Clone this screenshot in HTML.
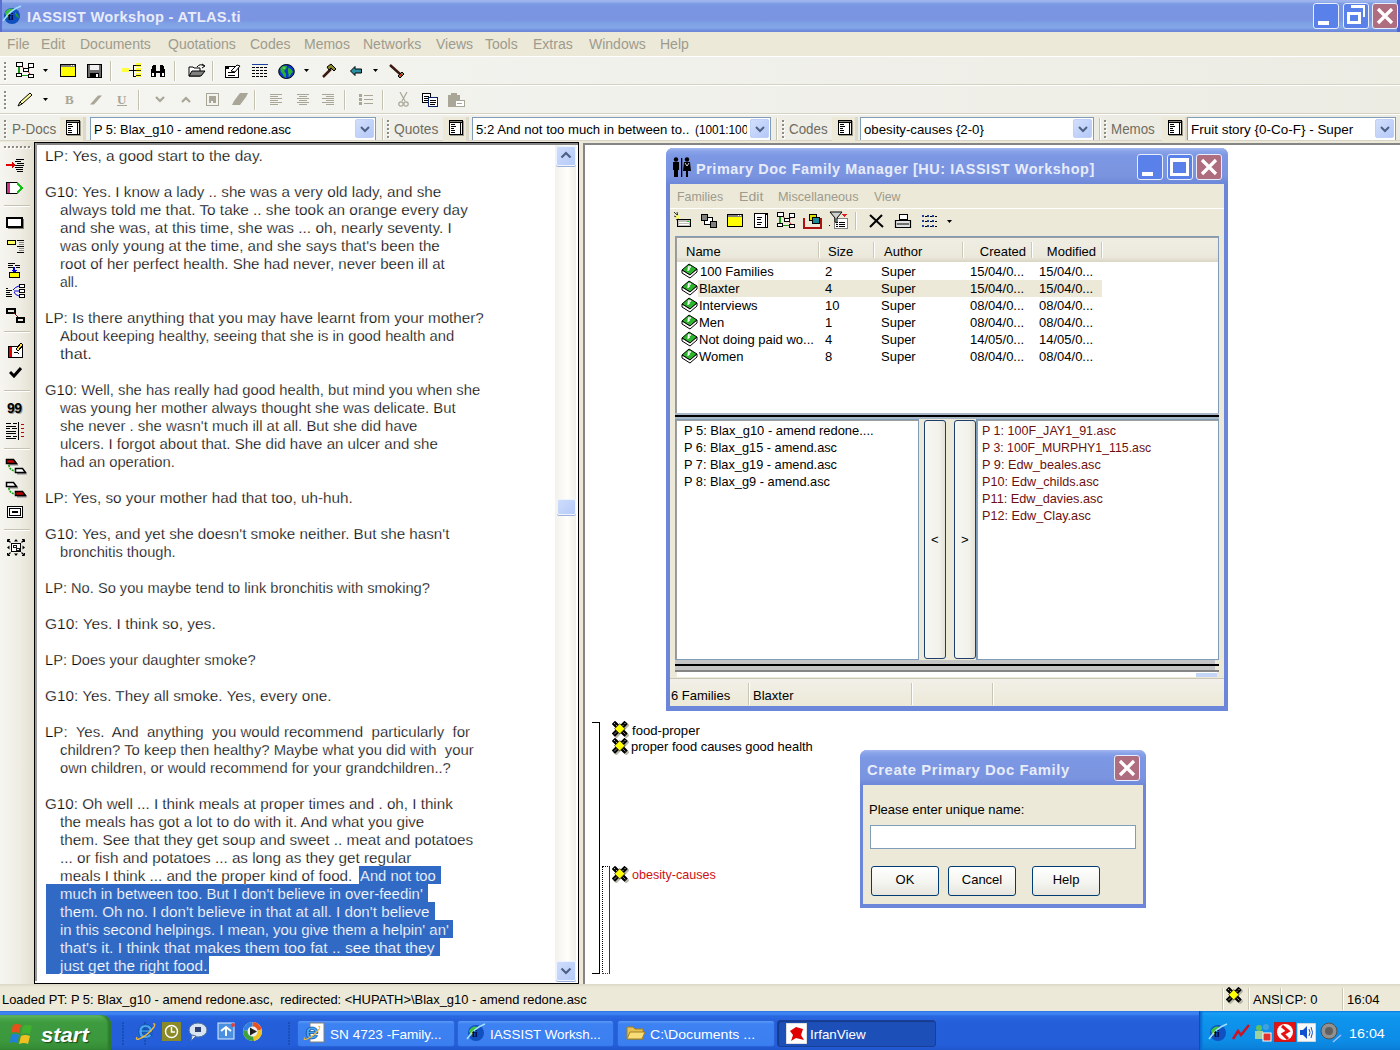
<!DOCTYPE html><html><head><meta charset="utf-8"><style>
*{margin:0;padding:0;box-sizing:border-box}
html,body{width:1400px;height:1050px;overflow:hidden;background:#ECE9D8;font-family:"Liberation Sans",sans-serif}
div{position:absolute}
.t{white-space:pre;line-height:1}
.b{font-weight:bold}
</style></head><body><div style="left:0px;top:0px;width:1400px;height:32px;background:linear-gradient(#A2B6EC 0px,#9AB1EC 2px,#7FA0E5 3px,#7A96E2 6px,#7A94E1 20px,#80A3E6 24px,#82A6E7 28px,#7290DE 30px,#6C84D8 32px)"></div>
<div style="left:0px;top:0px;width:2px;height:32px;background:#5B6FD0"></div>
<div style="left:1397px;top:0px;width:3px;height:32px;background:#5565CC"></div>
<div id="f0" class="t " style="left:27px;top:9.30px;font-size:15px;color:#E8ECFA;transform:scaleX(0.9777);transform-origin:0 0;font-weight:bold;letter-spacing:0.3px">IASSIST Workshop - ATLAS.ti</div>
<div style="left:1313px;top:3px;width:26px;height:26px;background:#5A80EA;border:1px solid #E8EEFB;border-radius:3px"></div>
<div style="left:1343px;top:3px;width:26px;height:26px;background:#5A80EA;border:1px solid #E8EEFB;border-radius:3px"></div>
<div style="left:1372px;top:3px;width:26px;height:26px;background:#AE6E80;border:1px solid #E8EEFB;border-radius:3px"></div>
<div style="left:1318px;top:21px;width:11px;height:4px;background:#fff"></div>
<div style="left:1347px;top:12px;width:14px;height:12px;border:3px solid #fff;border-top-width:3px"></div>
<div style="left:1351px;top:5px;width:14px;height:12px;border:2px solid #fff;border-top-width:3px;border-left:none;border-bottom:none"></div>
<svg style="position:absolute;left:1372px;top:3px;" width="26" height="26" viewBox="0 0 26 26"><path d="M6 6L20 20M20 6L6 20" stroke="#fff" stroke-width="3.2"/></svg>
<div style="left:0px;top:32px;width:1400px;height:24px;background:#ECE9D8"></div>
<div class="t " style="left:7px;top:37.15px;font-size:14px;color:#9E9B8E;">File</div>
<div class="t " style="left:41px;top:37.15px;font-size:14px;color:#9E9B8E;">Edit</div>
<div class="t " style="left:80px;top:37.15px;font-size:14px;color:#9E9B8E;">Documents</div>
<div class="t " style="left:168px;top:37.15px;font-size:14px;color:#9E9B8E;">Quotations</div>
<div class="t " style="left:250px;top:37.15px;font-size:14px;color:#9E9B8E;">Codes</div>
<div class="t " style="left:304px;top:37.15px;font-size:14px;color:#9E9B8E;">Memos</div>
<div class="t " style="left:363px;top:37.15px;font-size:14px;color:#9E9B8E;">Networks</div>
<div class="t " style="left:436px;top:37.15px;font-size:14px;color:#9E9B8E;">Views</div>
<div class="t " style="left:485px;top:37.15px;font-size:14px;color:#9E9B8E;">Tools</div>
<div class="t " style="left:533px;top:37.15px;font-size:14px;color:#9E9B8E;">Extras</div>
<div class="t " style="left:589px;top:37.15px;font-size:14px;color:#9E9B8E;">Windows</div>
<div class="t " style="left:660px;top:37.15px;font-size:14px;color:#9E9B8E;">Help</div>
<div style="left:0px;top:56px;width:1400px;height:1px;background:#fff"></div>
<div style="left:0px;top:57px;width:1400px;height:27px;background:linear-gradient(90deg,#F5F5F1 0%,#F1F1EC 45%,#EDECE3 100%)"></div>
<div style="left:0px;top:84px;width:1400px;height:1px;background:#D5D2C3"></div>
<div style="left:0px;top:85px;width:1400px;height:1px;background:#FFFFFF"></div>
<div style="left:0px;top:86px;width:1400px;height:27px;background:linear-gradient(90deg,#F5F5F1 0%,#F1F1EC 45%,#EDECE3 100%)"></div>
<div style="left:0px;top:113px;width:1400px;height:1px;background:#D5D2C3"></div>
<div style="left:0px;top:114px;width:1400px;height:1px;background:#FFFFFF"></div>
<div style="left:0px;top:115px;width:1400px;height:25px;background:linear-gradient(90deg,#F1F1EC,#ECEBE2)"></div>
<div style="left:0px;top:140px;width:1400px;height:1px;background:#D8D5C8"></div>
<div style="left:5px;top:63px;width:2px;height:2px;background:#FFFFFF"></div>
<div style="left:4px;top:62px;width:2px;height:2px;background:#8F8C7F"></div>
<div style="left:5px;top:67px;width:2px;height:2px;background:#FFFFFF"></div>
<div style="left:4px;top:66px;width:2px;height:2px;background:#8F8C7F"></div>
<div style="left:5px;top:71px;width:2px;height:2px;background:#FFFFFF"></div>
<div style="left:4px;top:70px;width:2px;height:2px;background:#8F8C7F"></div>
<div style="left:5px;top:75px;width:2px;height:2px;background:#FFFFFF"></div>
<div style="left:4px;top:74px;width:2px;height:2px;background:#8F8C7F"></div>
<div style="left:5px;top:79px;width:2px;height:2px;background:#FFFFFF"></div>
<div style="left:4px;top:78px;width:2px;height:2px;background:#8F8C7F"></div>
<div style="left:5px;top:92px;width:2px;height:2px;background:#FFFFFF"></div>
<div style="left:4px;top:91px;width:2px;height:2px;background:#8F8C7F"></div>
<div style="left:5px;top:96px;width:2px;height:2px;background:#FFFFFF"></div>
<div style="left:4px;top:95px;width:2px;height:2px;background:#8F8C7F"></div>
<div style="left:5px;top:100px;width:2px;height:2px;background:#FFFFFF"></div>
<div style="left:4px;top:99px;width:2px;height:2px;background:#8F8C7F"></div>
<div style="left:5px;top:104px;width:2px;height:2px;background:#FFFFFF"></div>
<div style="left:4px;top:103px;width:2px;height:2px;background:#8F8C7F"></div>
<div style="left:5px;top:108px;width:2px;height:2px;background:#FFFFFF"></div>
<div style="left:4px;top:107px;width:2px;height:2px;background:#8F8C7F"></div>
<div style="left:5px;top:121px;width:2px;height:2px;background:#FFFFFF"></div>
<div style="left:4px;top:120px;width:2px;height:2px;background:#8F8C7F"></div>
<div style="left:5px;top:125px;width:2px;height:2px;background:#FFFFFF"></div>
<div style="left:4px;top:124px;width:2px;height:2px;background:#8F8C7F"></div>
<div style="left:5px;top:129px;width:2px;height:2px;background:#FFFFFF"></div>
<div style="left:4px;top:128px;width:2px;height:2px;background:#8F8C7F"></div>
<div style="left:5px;top:133px;width:2px;height:2px;background:#FFFFFF"></div>
<div style="left:4px;top:132px;width:2px;height:2px;background:#8F8C7F"></div>
<div style="left:5px;top:137px;width:2px;height:2px;background:#FFFFFF"></div>
<div style="left:4px;top:136px;width:2px;height:2px;background:#8F8C7F"></div>
<div style="left:388px;top:121px;width:2px;height:2px;background:#FFFFFF"></div>
<div style="left:387px;top:120px;width:2px;height:2px;background:#8F8C7F"></div>
<div style="left:388px;top:125px;width:2px;height:2px;background:#FFFFFF"></div>
<div style="left:387px;top:124px;width:2px;height:2px;background:#8F8C7F"></div>
<div style="left:388px;top:129px;width:2px;height:2px;background:#FFFFFF"></div>
<div style="left:387px;top:128px;width:2px;height:2px;background:#8F8C7F"></div>
<div style="left:388px;top:133px;width:2px;height:2px;background:#FFFFFF"></div>
<div style="left:387px;top:132px;width:2px;height:2px;background:#8F8C7F"></div>
<div style="left:388px;top:137px;width:2px;height:2px;background:#FFFFFF"></div>
<div style="left:387px;top:136px;width:2px;height:2px;background:#8F8C7F"></div>
<div style="left:783px;top:121px;width:2px;height:2px;background:#FFFFFF"></div>
<div style="left:782px;top:120px;width:2px;height:2px;background:#8F8C7F"></div>
<div style="left:783px;top:125px;width:2px;height:2px;background:#FFFFFF"></div>
<div style="left:782px;top:124px;width:2px;height:2px;background:#8F8C7F"></div>
<div style="left:783px;top:129px;width:2px;height:2px;background:#FFFFFF"></div>
<div style="left:782px;top:128px;width:2px;height:2px;background:#8F8C7F"></div>
<div style="left:783px;top:133px;width:2px;height:2px;background:#FFFFFF"></div>
<div style="left:782px;top:132px;width:2px;height:2px;background:#8F8C7F"></div>
<div style="left:783px;top:137px;width:2px;height:2px;background:#FFFFFF"></div>
<div style="left:782px;top:136px;width:2px;height:2px;background:#8F8C7F"></div>
<div style="left:1105px;top:121px;width:2px;height:2px;background:#FFFFFF"></div>
<div style="left:1104px;top:120px;width:2px;height:2px;background:#8F8C7F"></div>
<div style="left:1105px;top:125px;width:2px;height:2px;background:#FFFFFF"></div>
<div style="left:1104px;top:124px;width:2px;height:2px;background:#8F8C7F"></div>
<div style="left:1105px;top:129px;width:2px;height:2px;background:#FFFFFF"></div>
<div style="left:1104px;top:128px;width:2px;height:2px;background:#8F8C7F"></div>
<div style="left:1105px;top:133px;width:2px;height:2px;background:#FFFFFF"></div>
<div style="left:1104px;top:132px;width:2px;height:2px;background:#8F8C7F"></div>
<div style="left:1105px;top:137px;width:2px;height:2px;background:#FFFFFF"></div>
<div style="left:1104px;top:136px;width:2px;height:2px;background:#8F8C7F"></div>
<div style="left:382px;top:118px;width:1px;height:22px;background:#C5C2B1"></div>
<div style="left:383px;top:118px;width:1px;height:22px;background:#fff"></div>
<div style="left:776px;top:118px;width:1px;height:22px;background:#C5C2B1"></div>
<div style="left:777px;top:118px;width:1px;height:22px;background:#fff"></div>
<div style="left:1099px;top:118px;width:1px;height:22px;background:#C5C2B1"></div>
<div style="left:1100px;top:118px;width:1px;height:22px;background:#fff"></div>
<div id="f1" class="t " style="left:11.5px;top:122.15px;font-size:14px;color:#6E6C61;transform:scaleX(0.9650);transform-origin:0 0;">P-Docs</div>
<div style="left:60px;top:117px;width:26px;height:24px;background:#ECE9D8;border-right:3px solid #DCD9CB"></div>
<svg style="position:absolute;left:66px;top:120px;" width="17" height="17" viewBox="0 0 17 17"><g shape-rendering="crispEdges"><rect x="1" y="1" width="14" height="15" fill="#9A988A"/><rect x="0" y="0" width="14" height="15" fill="#000"/><rect x="1" y="3" width="10" height="11" fill="#fff"/><rect x="12" y="3" width="1" height="11" fill="#F4F2E8"/><rect x="1" y="1" width="12" height="1" fill="#8A8778"/><rect x="2" y="4" width="4" height="1" fill="#000"/><rect x="2" y="6" width="5" height="1" fill="#000"/><rect x="2" y="8" width="3" height="1" fill="#000"/><rect x="2" y="10" width="4" height="1" fill="#000"/><rect x="2" y="12" width="4" height="1" fill="#000"/></g></svg>
<div style="left:90px;top:117px;width:286px;height:23px;background:#fff;border:1px solid #7F9DB9;border-bottom:none"></div>
<div id="f2" class="t " style="left:93.5px;top:123.00px;font-size:13px;color:#000;transform:scaleX(0.9852);transform-origin:0 0;">P 5: Blax_g10 - amend redone.asc</div>
<div style="left:355px;top:119px;width:19px;height:19px;background:linear-gradient(135deg,#D2DEFC,#B4C9F8);border:1px solid #C0D0F6;border-radius:2px"></div>
<svg style="position:absolute;left:360px;top:126px;" width="10" height="7" viewBox="0 0 10 7"><path d="M1 1L5 5L9 1" stroke="#4D6185" stroke-width="2" fill="none"/></svg>
<div id="f3" class="t " style="left:393.5px;top:122.15px;font-size:14px;color:#6E6C61;transform:scaleX(0.9814);transform-origin:0 0;">Quotes</div>
<div style="left:443px;top:117px;width:26px;height:24px;background:#ECE9D8;border-right:3px solid #DCD9CB"></div>
<svg style="position:absolute;left:449px;top:120px;" width="17" height="17" viewBox="0 0 17 17"><g shape-rendering="crispEdges"><rect x="1" y="1" width="14" height="15" fill="#9A988A"/><rect x="0" y="0" width="14" height="15" fill="#000"/><rect x="1" y="3" width="10" height="11" fill="#fff"/><rect x="12" y="3" width="1" height="11" fill="#F4F2E8"/><rect x="1" y="1" width="12" height="1" fill="#8A8778"/><rect x="2" y="4" width="4" height="1" fill="#000"/><rect x="2" y="6" width="5" height="1" fill="#000"/><rect x="2" y="8" width="3" height="1" fill="#000"/><rect x="2" y="10" width="4" height="1" fill="#000"/><rect x="2" y="12" width="4" height="1" fill="#000"/></g></svg>
<div style="left:472px;top:117px;width:299px;height:23px;background:#fff;border:1px solid #7F9DB9;border-bottom:none"></div>
<div id="f4" class="t " style="left:475.5px;top:123.00px;font-size:13px;color:#000;transform:scaleX(1.0107);transform-origin:0 0;">5:2 And not too much in between to..</div>
<div style="left:750px;top:119px;width:19px;height:19px;background:linear-gradient(135deg,#D2DEFC,#B4C9F8);border:1px solid #C0D0F6;border-radius:2px"></div>
<svg style="position:absolute;left:755px;top:126px;" width="10" height="7" viewBox="0 0 10 7"><path d="M1 1L5 5L9 1" stroke="#4D6185" stroke-width="2" fill="none"/></svg>
<div id="f5" class="t " style="left:788.5px;top:122.15px;font-size:14px;color:#6E6C61;transform:scaleX(0.9538);transform-origin:0 0;">Codes</div>
<div style="left:832px;top:117px;width:26px;height:24px;background:#ECE9D8;border-right:3px solid #DCD9CB"></div>
<svg style="position:absolute;left:838px;top:120px;" width="17" height="17" viewBox="0 0 17 17"><g shape-rendering="crispEdges"><rect x="1" y="1" width="14" height="15" fill="#9A988A"/><rect x="0" y="0" width="14" height="15" fill="#000"/><rect x="1" y="3" width="10" height="11" fill="#fff"/><rect x="12" y="3" width="1" height="11" fill="#F4F2E8"/><rect x="1" y="1" width="12" height="1" fill="#8A8778"/><rect x="2" y="4" width="4" height="1" fill="#000"/><rect x="2" y="6" width="5" height="1" fill="#000"/><rect x="2" y="8" width="3" height="1" fill="#000"/><rect x="2" y="10" width="4" height="1" fill="#000"/><rect x="2" y="12" width="4" height="1" fill="#000"/></g></svg>
<div style="left:860px;top:117px;width:234px;height:23px;background:#fff;border:1px solid #7F9DB9;border-bottom:none"></div>
<div id="f6" class="t " style="left:863.5px;top:123.00px;font-size:13px;color:#000;transform:scaleX(1.0179);transform-origin:0 0;">obesity-causes {2-0}</div>
<div style="left:1073px;top:119px;width:19px;height:19px;background:linear-gradient(135deg,#D2DEFC,#B4C9F8);border:1px solid #C0D0F6;border-radius:2px"></div>
<svg style="position:absolute;left:1078px;top:126px;" width="10" height="7" viewBox="0 0 10 7"><path d="M1 1L5 5L9 1" stroke="#4D6185" stroke-width="2" fill="none"/></svg>
<div id="f7" class="t " style="left:1111px;top:122.15px;font-size:14px;color:#6E6C61;transform:scaleX(0.9541);transform-origin:0 0;">Memos</div>
<div style="left:1162px;top:117px;width:26px;height:24px;background:#ECE9D8;border-right:3px solid #DCD9CB"></div>
<svg style="position:absolute;left:1168px;top:120px;" width="17" height="17" viewBox="0 0 17 17"><g shape-rendering="crispEdges"><rect x="1" y="1" width="14" height="15" fill="#9A988A"/><rect x="0" y="0" width="14" height="15" fill="#000"/><rect x="1" y="3" width="10" height="11" fill="#fff"/><rect x="12" y="3" width="1" height="11" fill="#F4F2E8"/><rect x="1" y="1" width="12" height="1" fill="#8A8778"/><rect x="2" y="4" width="4" height="1" fill="#000"/><rect x="2" y="6" width="5" height="1" fill="#000"/><rect x="2" y="8" width="3" height="1" fill="#000"/><rect x="2" y="10" width="4" height="1" fill="#000"/><rect x="2" y="12" width="4" height="1" fill="#000"/></g></svg>
<div style="left:1187px;top:117px;width:209px;height:23px;background:#fff;border:1px solid #7F9DB9;border-bottom:none"></div>
<div id="f8" class="t " style="left:1190.5px;top:123.00px;font-size:13px;color:#000;transform:scaleX(1.0352);transform-origin:0 0;">Fruit story {0-Co-F} - Super</div>
<div style="left:1375px;top:119px;width:19px;height:19px;background:linear-gradient(135deg,#D2DEFC,#B4C9F8);border:1px solid #C0D0F6;border-radius:2px"></div>
<svg style="position:absolute;left:1380px;top:126px;" width="10" height="7" viewBox="0 0 10 7"><path d="M1 1L5 5L9 1" stroke="#4D6185" stroke-width="2" fill="none"/></svg>
<div style="left:694px;top:117px;width:53px;height:23px;overflow:hidden">
<div id="f9" class="t " style="left:1px;top:6.00px;font-size:13px;color:#000;transform:scaleX(0.9091);transform-origin:0 0;">(1001:1001</div>
</div>
<div style="left:750px;top:119px;width:19px;height:19px;background:linear-gradient(135deg,#D2DEFC,#B4C9F8);border:1px solid #C0D0F6;border-radius:2px"></div>
<svg style="position:absolute;left:755px;top:126px;" width="10" height="7" viewBox="0 0 10 7"><path d="M1 1L5 5L9 1" stroke="#4D6185" stroke-width="2" fill="none"/></svg>
<div style="left:0px;top:142px;width:34px;height:843px;background:linear-gradient(90deg,#F6F5F0,#EEECE3 60%,#E3E0D0)"></div>
<div style="left:5px;top:147px;width:2px;height:2px;background:#fff"></div>
<div style="left:4px;top:146px;width:2px;height:2px;background:#8F8C7F"></div>
<div style="left:9px;top:147px;width:2px;height:2px;background:#fff"></div>
<div style="left:8px;top:146px;width:2px;height:2px;background:#8F8C7F"></div>
<div style="left:13px;top:147px;width:2px;height:2px;background:#fff"></div>
<div style="left:12px;top:146px;width:2px;height:2px;background:#8F8C7F"></div>
<div style="left:17px;top:147px;width:2px;height:2px;background:#fff"></div>
<div style="left:16px;top:146px;width:2px;height:2px;background:#8F8C7F"></div>
<div style="left:21px;top:147px;width:2px;height:2px;background:#fff"></div>
<div style="left:20px;top:146px;width:2px;height:2px;background:#8F8C7F"></div>
<div style="left:25px;top:147px;width:2px;height:2px;background:#fff"></div>
<div style="left:24px;top:146px;width:2px;height:2px;background:#8F8C7F"></div>
<div style="left:29px;top:147px;width:2px;height:2px;background:#fff"></div>
<div style="left:28px;top:146px;width:2px;height:2px;background:#8F8C7F"></div>
<div style="left:34px;top:142px;width:545px;height:842px;background:#fff;border-top:1px solid #000;border-left:1px solid #000;border-right:1px solid #000;border-bottom:1px solid #000"></div>
<div style="left:35px;top:143px;width:543px;height:2px;background:#858585"></div>
<div style="left:35px;top:143px;width:2px;height:838px;background:#9A9A9A"></div>
<div style="left:35px;top:981px;width:543px;height:1px;background:#fff"></div>
<div style="left:555px;top:145px;width:21px;height:837px;background:linear-gradient(90deg,#F3F1EC,#FEFEFB 60%,#F0EFE8)"></div>
<div style="left:556px;top:146px;width:20px;height:20px;background:linear-gradient(135deg,#CEDCFC,#B6CBF9);border:1px solid #EEF3FE;border-radius:2px;box-shadow:0 1px 0 #9BB0DC"></div>
<svg style="position:absolute;left:560px;top:151px;" width="12" height="8" viewBox="0 0 12 8"><path d="M1.5 6.5L6 2L10.5 6.5" stroke="#4D6185" stroke-width="2.2" fill="none"/></svg>
<div style="left:556px;top:961px;width:20px;height:20px;background:linear-gradient(135deg,#CEDCFC,#B6CBF9);border:1px solid #EEF3FE;border-radius:2px;box-shadow:0 1px 0 #9BB0DC"></div>
<svg style="position:absolute;left:560px;top:967px;" width="12" height="8" viewBox="0 0 12 8"><path d="M1.5 1.5L6 6L10.5 1.5" stroke="#4D6185" stroke-width="2.2" fill="none"/></svg>
<div style="left:557px;top:499px;width:19px;height:16px;background:linear-gradient(135deg,#CEDCFC,#B6CBF9);border:1px solid #EEF3FE;border-radius:2px;box-shadow:0 1px 0 #9BB0DC"></div>
<div style="left:583px;top:143px;width:817px;height:841px;background:#fff;border-top:2px solid #858585;border-left:2px solid #858585"></div>
<div style="left:0px;top:984px;width:1400px;height:27px;background:linear-gradient(#D9D6C6 0px,#E6E3D2 2px,#ECE9D8 4px)"></div>
<div id="f10" class="t " style="left:2px;top:993.00px;font-size:13px;color:#000;transform:scaleX(0.9929);transform-origin:0 0;">Loaded PT: P 5: Blax_g10 - amend redone.asc,  redirected: &lt;HUPATH&gt;\Blax_g10 - amend redone.asc</div>
<div style="left:1222px;top:988px;width:1px;height:22px;background:#C9C6B8"></div>
<div style="left:1223px;top:988px;width:1px;height:22px;background:#fff"></div>
<div style="left:1248px;top:988px;width:1px;height:22px;background:#C9C6B8"></div>
<div style="left:1249px;top:988px;width:1px;height:22px;background:#fff"></div>
<div style="left:1280px;top:988px;width:1px;height:22px;background:#C9C6B8"></div>
<div style="left:1281px;top:988px;width:1px;height:22px;background:#fff"></div>
<div style="left:1342px;top:988px;width:1px;height:22px;background:#C9C6B8"></div>
<div style="left:1343px;top:988px;width:1px;height:22px;background:#fff"></div>
<div class="t " style="left:1253px;top:993.00px;font-size:13px;color:#000;">ANSI</div>
<div class="t " style="left:1285px;top:993.00px;font-size:13px;color:#000;">CP: 0</div>
<div class="t " style="left:1347px;top:993.00px;font-size:13px;color:#000;">16:04</div>
<div style="left:0px;top:1011px;width:1400px;height:39px;background:linear-gradient(#2A6FE0 0px,#3B83F0 1px,#3F86F2 3px,#2A68E2 5px,#245ED9 12px,#245ED9 34px,#1F55CC 39px)"></div>
<div style="left:0px;top:1015px;width:111px;height:35px;background:linear-gradient(#6EBE6E 0px,#4CA84C 3px,#3E9A3E 8px,#3C983C 26px,#338A33 35px);border-radius:0 9px 0 0;box-shadow:inset -3px 0 2px #2C7A2C"></div>
<div id="f11" class="t " style="left:41px;top:1025.07px;font-size:20px;color:#fff;transform:scaleX(1.1024);transform-origin:0 0;font-weight:bold;font-style:italic;text-shadow:1px 1px 1px #1C4A1C">start</div>
<div style="left:297px;top:1020px;width:158px;height:27px;background:linear-gradient(#5A99F7 0px,#3D82F3 3px,#3B7EF0 24px,#2F6FE4 27px);border:1px solid #2A63D8;border-radius:3px"></div>
<div id="f12" class="t " style="left:330px;top:1027.57px;font-size:13.5px;color:#fff;transform:scaleX(1.0063);transform-origin:0 0;">SN 4723 -Family...</div>
<div style="left:457px;top:1020px;width:157px;height:27px;background:linear-gradient(#5A99F7 0px,#3D82F3 3px,#3B7EF0 24px,#2F6FE4 27px);border:1px solid #2A63D8;border-radius:3px"></div>
<div id="f13" class="t " style="left:490px;top:1027.57px;font-size:13.5px;color:#fff;transform:scaleX(0.9889);transform-origin:0 0;">IASSIST Worksh...</div>
<div style="left:617px;top:1020px;width:158px;height:27px;background:linear-gradient(#5A99F7 0px,#3D82F3 3px,#3B7EF0 24px,#2F6FE4 27px);border:1px solid #2A63D8;border-radius:3px"></div>
<div id="f14" class="t " style="left:650px;top:1027.57px;font-size:13.5px;color:#fff;transform:scaleX(1.0453);transform-origin:0 0;">C:\Documents ...</div>
<div style="left:777px;top:1020px;width:159px;height:27px;background:#1D4FB8;border:1px solid #173F98;box-shadow:inset 1px 1px 1px #173A8A;border-radius:3px"></div>
<div id="f15" class="t " style="left:810px;top:1027.57px;font-size:13.5px;color:#fff;transform:scaleX(0.9923);transform-origin:0 0;">IrfanView</div>
<div style="left:1199px;top:1011px;width:201px;height:39px;background:linear-gradient(#0F80E8 0px,#17A0F5 2px,#0E95EE 6px,#0C8CE6 30px,#0B7FD8 39px);border-left:1px solid #0A4FB8;box-shadow:inset 2px 0 2px #0A6AD0"></div>
<div id="f16" class="t " style="left:1349px;top:1026.57px;font-size:13.5px;color:#fff;transform:scaleX(1.0593);transform-origin:0 0;">16:04</div>
<div style="left:359px;top:866px;width:82px;height:18px;background:#316AC5"></div>
<div style="left:46px;top:884px;width:382px;height:18px;background:#316AC5"></div>
<div style="left:46px;top:902px;width:389px;height:18px;background:#316AC5"></div>
<div style="left:46px;top:920px;width:407px;height:18px;background:#316AC5"></div>
<div style="left:46px;top:938px;width:394px;height:18px;background:#316AC5"></div>
<div style="left:46px;top:956px;width:163px;height:18px;background:#316AC5"></div>
<div id="f17" class="t " style="left:45px;top:148.05px;font-size:15.3px;color:#000;transform:scaleX(1.0096);transform-origin:0 0;-webkit-text-stroke:0.25px #fff">LP: Yes, a good start to the day.</div>
<div id="f18" class="t " style="left:45px;top:184.05px;font-size:15.3px;color:#000;transform:scaleX(0.9966);transform-origin:0 0;-webkit-text-stroke:0.25px #fff">G10: Yes. I know a lady .. she was a very old lady, and she</div>
<div id="f19" class="t " style="left:60px;top:202.05px;font-size:15.3px;color:#000;transform:scaleX(1.0019);transform-origin:0 0;-webkit-text-stroke:0.25px #fff">always told me that. To take .. she took an orange every day</div>
<div id="f20" class="t " style="left:60px;top:220.05px;font-size:15.3px;color:#000;transform:scaleX(1.0047);transform-origin:0 0;-webkit-text-stroke:0.25px #fff">and she was, at this time, she was ... oh, nearly seventy. I</div>
<div id="f21" class="t " style="left:60px;top:238.05px;font-size:15.3px;color:#000;transform:scaleX(0.9893);transform-origin:0 0;-webkit-text-stroke:0.25px #fff">was only young at the time, and she says that's been the</div>
<div id="f22" class="t " style="left:60px;top:256.05px;font-size:15.3px;color:#000;transform:scaleX(0.9858);transform-origin:0 0;-webkit-text-stroke:0.25px #fff">root of her perfect health. She had never, never been ill at</div>
<div id="f23" class="t " style="left:60px;top:274.05px;font-size:15.3px;color:#000;transform:scaleX(0.9099);transform-origin:0 0;-webkit-text-stroke:0.25px #fff">all.</div>
<div id="f24" class="t " style="left:45px;top:310.05px;font-size:15.3px;color:#000;transform:scaleX(0.9943);transform-origin:0 0;-webkit-text-stroke:0.25px #fff">LP: Is there anything that you may have learnt from your mother?</div>
<div id="f25" class="t " style="left:60px;top:328.05px;font-size:15.3px;color:#000;transform:scaleX(0.9663);transform-origin:0 0;-webkit-text-stroke:0.25px #fff">About keeping healthy, seeing that she is in good health and</div>
<div id="f26" class="t " style="left:60px;top:346.05px;font-size:15.3px;color:#000;transform:scaleX(1.0683);transform-origin:0 0;-webkit-text-stroke:0.25px #fff">that.</div>
<div id="f27" class="t " style="left:45px;top:382.05px;font-size:15.3px;color:#000;transform:scaleX(0.9681);transform-origin:0 0;-webkit-text-stroke:0.25px #fff">G10: Well, she has really had good health, but mind you when she</div>
<div id="f28" class="t " style="left:60px;top:400.05px;font-size:15.3px;color:#000;transform:scaleX(0.9735);transform-origin:0 0;-webkit-text-stroke:0.25px #fff">was young her mother always thought she was delicate. But</div>
<div id="f29" class="t " style="left:60px;top:418.05px;font-size:15.3px;color:#000;transform:scaleX(0.9743);transform-origin:0 0;-webkit-text-stroke:0.25px #fff">she never . she wasn't much ill at all. But she did have</div>
<div id="f30" class="t " style="left:60px;top:436.05px;font-size:15.3px;color:#000;transform:scaleX(0.9829);transform-origin:0 0;-webkit-text-stroke:0.25px #fff">ulcers. I forgot about that. She did have an ulcer and she</div>
<div id="f31" class="t " style="left:60px;top:454.05px;font-size:15.3px;color:#000;transform:scaleX(0.9641);transform-origin:0 0;-webkit-text-stroke:0.25px #fff">had an operation.</div>
<div id="f32" class="t " style="left:45px;top:490.05px;font-size:15.3px;color:#000;transform:scaleX(0.9999);transform-origin:0 0;-webkit-text-stroke:0.25px #fff">LP: Yes, so your mother had that too, uh-huh.</div>
<div id="f33" class="t " style="left:45px;top:526.05px;font-size:15.3px;color:#000;transform:scaleX(0.9930);transform-origin:0 0;-webkit-text-stroke:0.25px #fff">G10: Yes, and yet she doesn't smoke neither. But she hasn't</div>
<div id="f34" class="t " style="left:60px;top:544.05px;font-size:15.3px;color:#000;transform:scaleX(0.9581);transform-origin:0 0;-webkit-text-stroke:0.25px #fff">bronchitis though.</div>
<div id="f35" class="t " style="left:45px;top:580.05px;font-size:15.3px;color:#000;transform:scaleX(0.9568);transform-origin:0 0;-webkit-text-stroke:0.25px #fff">LP: No. So you maybe tend to link bronchitis with smoking?</div>
<div id="f36" class="t " style="left:45px;top:616.05px;font-size:15.3px;color:#000;transform:scaleX(1.0138);transform-origin:0 0;-webkit-text-stroke:0.25px #fff">G10: Yes. I think so, yes.</div>
<div id="f37" class="t " style="left:45px;top:652.05px;font-size:15.3px;color:#000;transform:scaleX(0.9604);transform-origin:0 0;-webkit-text-stroke:0.25px #fff">LP: Does your daughter smoke?</div>
<div id="f38" class="t " style="left:45px;top:688.05px;font-size:15.3px;color:#000;transform:scaleX(1.0007);transform-origin:0 0;-webkit-text-stroke:0.25px #fff">G10: Yes. They all smoke. Yes, every one.</div>
<div id="f39" class="t " style="left:45px;top:724.05px;font-size:15.3px;color:#000;transform:scaleX(0.9822);transform-origin:0 0;-webkit-text-stroke:0.25px #fff">LP:  Yes.  And  anything  you would recommend  particularly  for</div>
<div id="f40" class="t " style="left:60px;top:742.05px;font-size:15.3px;color:#000;transform:scaleX(0.9715);transform-origin:0 0;-webkit-text-stroke:0.25px #fff">children? To keep then healthy? Maybe what you did with  your</div>
<div id="f41" class="t " style="left:60px;top:760.05px;font-size:15.3px;color:#000;transform:scaleX(0.9595);transform-origin:0 0;-webkit-text-stroke:0.25px #fff">own children, or would recommend for your grandchildren..?</div>
<div id="f42" class="t " style="left:45px;top:796.05px;font-size:15.3px;color:#000;transform:scaleX(0.9930);transform-origin:0 0;-webkit-text-stroke:0.25px #fff">G10: Oh well ... I think meals at proper times and . oh, I think</div>
<div id="f43" class="t " style="left:60px;top:814.05px;font-size:15.3px;color:#000;transform:scaleX(0.9894);transform-origin:0 0;-webkit-text-stroke:0.25px #fff">the meals has got a lot to do with it. And what you give</div>
<div id="f44" class="t " style="left:60px;top:832.05px;font-size:15.3px;color:#000;transform:scaleX(0.9995);transform-origin:0 0;-webkit-text-stroke:0.25px #fff">them. See that they get soup and sweet .. meat and potatoes</div>
<div id="f45" class="t " style="left:60px;top:850.05px;font-size:15.3px;color:#000;transform:scaleX(0.9958);transform-origin:0 0;-webkit-text-stroke:0.25px #fff">... or fish and potatoes ... as long as they get regular</div>
<div id="f46" class="t " style="left:60px;top:868.05px;font-size:15.3px;color:#000;transform:scaleX(0.9935);transform-origin:0 0;-webkit-text-stroke:0.25px #fff">meals I think ... and the proper kind of food.</div>
<div id="f47" class="t " style="left:360px;top:868.05px;font-size:15.3px;color:#fff;transform:scaleX(0.9687);transform-origin:0 0;-webkit-text-stroke:0.2px #316AC5">And not too</div>
<div id="f48" class="t " style="left:60px;top:886.05px;font-size:15.3px;color:#fff;transform:scaleX(0.9788);transform-origin:0 0;-webkit-text-stroke:0.2px #316AC5">much in between too. But I don't believe in over-feedin'</div>
<div id="f49" class="t " style="left:60px;top:904.05px;font-size:15.3px;color:#fff;transform:scaleX(0.9943);transform-origin:0 0;-webkit-text-stroke:0.2px #316AC5">them. Oh no. I don't believe in that at all. I don't believe</div>
<div id="f50" class="t " style="left:60px;top:922.05px;font-size:15.3px;color:#fff;transform:scaleX(0.9751);transform-origin:0 0;-webkit-text-stroke:0.2px #316AC5">in this second helpings. I mean, you give them a helpin' an'</div>
<div id="f51" class="t " style="left:60px;top:940.05px;font-size:15.3px;color:#fff;transform:scaleX(1.0235);transform-origin:0 0;-webkit-text-stroke:0.2px #316AC5">that's it. I think that makes them too fat .. see that they</div>
<div id="f52" class="t " style="left:60px;top:958.05px;font-size:15.3px;color:#fff;transform:scaleX(1.0019);transform-origin:0 0;-webkit-text-stroke:0.2px #316AC5">just get the right food.</div>
<svg style="position:absolute;left:612px;top:721px;" width="17" height="17" viewBox="0 0 17 17"><path d="M3.5 3.5L13.5 13.5M13.5 3.5L3.5 13.5" stroke="#B8B8A8" stroke-width="4.5" stroke-linecap="square" transform="translate(0.8,0.8)"/><path d="M3 3L12.5 12.5M12.5 3L3 12.5" stroke="#000" stroke-width="4.6" stroke-linecap="square"/><path d="M2.2 2.2L13.3 13.3M13.3 2.2L2.2 13.3" stroke="#fff" stroke-width="0.9" stroke-dasharray="1.2 1.2"/><path d="M7.75 2.6L12.9 7.75L7.75 12.9L2.6 7.75Z" fill="#FFFF00" stroke="#000" stroke-width="0.6"/></svg>
<div id="f53" class="t " style="left:632px;top:724.00px;font-size:13px;color:#000;transform:scaleX(1.0086);transform-origin:0 0;">food-proper</div>
<svg style="position:absolute;left:612px;top:738px;" width="17" height="17" viewBox="0 0 17 17"><path d="M3.5 3.5L13.5 13.5M13.5 3.5L3.5 13.5" stroke="#B8B8A8" stroke-width="4.5" stroke-linecap="square" transform="translate(0.8,0.8)"/><path d="M3 3L12.5 12.5M12.5 3L3 12.5" stroke="#000" stroke-width="4.6" stroke-linecap="square"/><path d="M2.2 2.2L13.3 13.3M13.3 2.2L2.2 13.3" stroke="#fff" stroke-width="0.9" stroke-dasharray="1.2 1.2"/><path d="M7.75 2.6L12.9 7.75L7.75 12.9L2.6 7.75Z" fill="#FFFF00" stroke="#000" stroke-width="0.6"/></svg>
<div id="f54" class="t " style="left:631px;top:740.00px;font-size:13px;color:#000;transform:scaleX(0.9942);transform-origin:0 0;">proper food causes good health</div>
<svg style="position:absolute;left:612px;top:866px;" width="17" height="17" viewBox="0 0 17 17"><path d="M3.5 3.5L13.5 13.5M13.5 3.5L3.5 13.5" stroke="#B8B8A8" stroke-width="4.5" stroke-linecap="square" transform="translate(0.8,0.8)"/><path d="M3 3L12.5 12.5M12.5 3L3 12.5" stroke="#000" stroke-width="4.6" stroke-linecap="square"/><path d="M2.2 2.2L13.3 13.3M13.3 2.2L2.2 13.3" stroke="#fff" stroke-width="0.9" stroke-dasharray="1.2 1.2"/><path d="M7.75 2.6L12.9 7.75L7.75 12.9L2.6 7.75Z" fill="#FFFF00" stroke="#000" stroke-width="0.6"/></svg>
<div id="f55" class="t " style="left:632px;top:868.00px;font-size:13px;color:#D01010;transform:scaleX(0.9663);transform-origin:0 0;">obesity-causes</div>
<div style="left:592px;top:722px;width:8px;height:1px;background:#000"></div>
<div style="left:599px;top:722px;width:1px;height:252px;background:#000"></div>
<div style="left:592px;top:973px;width:8px;height:1px;background:#000"></div>
<div style="left:602px;top:866px;width:8px;height:108px;border:1px dotted #000;border-left:1px dotted #000;border-right:1px solid #C00000;border-bottom:1px dotted #C00000"></div>
<div style="left:666px;top:148px;width:562px;height:563px;background:#6C87DA;border-radius:7px 7px 0 0"></div>
<div style="left:666px;top:148px;width:562px;height:36px;background:linear-gradient(#A3B6EE 0px,#8AA4EA 3px,#7C97E3 8px,#7A94E0 28px,#6F89DA 35px);border-radius:7px 7px 0 0"></div>
<div id="f56" class="t " style="left:696px;top:161.56px;font-size:14.7px;color:#E8ECFA;transform:scaleX(0.9838);transform-origin:0 0;font-weight:bold;letter-spacing:0.55px">Primary Doc Family Manager [HU: IASSIST Workshop]</div>
<div style="left:1137px;top:154px;width:26px;height:26px;background:#5A80EA;border:1px solid #E8EEFB;border-radius:3px"></div>
<div style="left:1167px;top:154px;width:26px;height:26px;background:#5A80EA;border:1px solid #E8EEFB;border-radius:3px"></div>
<div style="left:1196px;top:154px;width:26px;height:26px;background:#AE6E80;border:1px solid #E8EEFB;border-radius:3px"></div>
<div style="left:1142px;top:172px;width:11px;height:4px;background:#fff"></div>
<div style="left:1170px;top:158px;width:19px;height:18px;border:3px solid #fff;border-top-width:4px"></div>
<svg style="position:absolute;left:1196px;top:154px;" width="26" height="26" viewBox="0 0 26 26"><path d="M6 6L20 20M20 6L6 20" stroke="#fff" stroke-width="3.2"/></svg>
<div style="left:670px;top:184px;width:554px;height:522px;background:#ECE9D8"></div>
<div id="f57" class="t " style="left:677px;top:189.66px;font-size:13.4px;color:#9E9B8E;transform:scaleX(0.9246);transform-origin:0 0;">Families</div>
<div id="f58" class="t " style="left:738.5px;top:189.66px;font-size:13.4px;color:#9E9B8E;transform:scaleX(1.0529);transform-origin:0 0;">Edit</div>
<div id="f59" class="t " style="left:777.5px;top:189.66px;font-size:13.4px;color:#9E9B8E;transform:scaleX(0.9486);transform-origin:0 0;">Miscellaneous</div>
<div id="f60" class="t " style="left:874px;top:189.66px;font-size:13.4px;color:#9E9B8E;transform:scaleX(0.9202);transform-origin:0 0;">View</div>
<div style="left:670px;top:208px;width:554px;height:1px;background:#fff"></div>
<div style="left:675px;top:236px;width:544px;height:178px;background:#fff;border:1px solid #7F9DB9"></div>
<div style="left:676px;top:237px;width:542px;height:1px;background:#9D9D9D"></div>
<div style="left:676px;top:237px;width:1px;height:176px;background:#9D9D9D"></div>
<div style="left:677px;top:238px;width:541px;height:24px;background:linear-gradient(#F0EEE4,#EBE8DB 80%,#D8D5C4)"></div>
<div style="left:818px;top:242px;width:1px;height:16px;background:#CCC9B8"></div>
<div style="left:819px;top:242px;width:1px;height:16px;background:#fff"></div>
<div style="left:873px;top:242px;width:1px;height:16px;background:#CCC9B8"></div>
<div style="left:874px;top:242px;width:1px;height:16px;background:#fff"></div>
<div style="left:962px;top:242px;width:1px;height:16px;background:#CCC9B8"></div>
<div style="left:963px;top:242px;width:1px;height:16px;background:#fff"></div>
<div style="left:1031px;top:242px;width:1px;height:16px;background:#CCC9B8"></div>
<div style="left:1032px;top:242px;width:1px;height:16px;background:#fff"></div>
<div style="left:1101px;top:242px;width:1px;height:16px;background:#CCC9B8"></div>
<div style="left:1102px;top:242px;width:1px;height:16px;background:#fff"></div>
<div class="t " style="left:686px;top:245.00px;font-size:13px;color:#000;">Name</div>
<div class="t " style="left:828px;top:245.00px;font-size:13px;color:#000;">Size</div>
<div class="t " style="left:884px;top:245.00px;font-size:13px;color:#000;">Author</div>
<div class="t " style="left:1026px;top:245.00px;font-size:13px;color:#000;transform:translateX(-100%)">Created</div>
<div class="t " style="left:1096px;top:245.00px;font-size:13px;color:#000;transform:translateX(-100%)">Modified</div>
<div style="left:698px;top:280px;width:404px;height:17px;background:#ECE9D8"></div>
<svg style="position:absolute;left:681px;top:262px;" width="17" height="17" viewBox="0 0 17 17"><path d="M1 8L8 2L16 7L9 13Z" fill="#2DB52D" stroke="#000" stroke-width="1"/><path d="M1 8L1 11L9 16L16 10L16 7L9 13Z" fill="#fff" stroke="#000" stroke-width="1"/><path d="M7 5h3M7.5 5L7 9M7 7h2" stroke="#fff" stroke-width="1.3"/></svg>
<div class="t " style="left:700px;top:265.00px;font-size:13px;color:#000;">100 Families</div>
<div class="t " style="left:825px;top:265.00px;font-size:13px;color:#000;">2</div>
<div class="t " style="left:881px;top:265.00px;font-size:13px;color:#000;">Super</div>
<div class="t " style="left:970px;top:265.00px;font-size:13px;color:#000;">15/04/0...</div>
<div class="t " style="left:1039px;top:265.00px;font-size:13px;color:#000;">15/04/0...</div>
<svg style="position:absolute;left:681px;top:279px;" width="17" height="17" viewBox="0 0 17 17"><path d="M1 8L8 2L16 7L9 13Z" fill="#2DB52D" stroke="#000" stroke-width="1"/><path d="M1 8L1 11L9 16L16 10L16 7L9 13Z" fill="#fff" stroke="#000" stroke-width="1"/><path d="M7 5h3M7.5 5L7 9M7 7h2" stroke="#fff" stroke-width="1.3"/></svg>
<div class="t " style="left:699px;top:282.00px;font-size:13px;color:#000;">Blaxter</div>
<div class="t " style="left:825px;top:282.00px;font-size:13px;color:#000;">4</div>
<div class="t " style="left:881px;top:282.00px;font-size:13px;color:#000;">Super</div>
<div class="t " style="left:970px;top:282.00px;font-size:13px;color:#000;">15/04/0...</div>
<div class="t " style="left:1039px;top:282.00px;font-size:13px;color:#000;">15/04/0...</div>
<svg style="position:absolute;left:681px;top:296px;" width="17" height="17" viewBox="0 0 17 17"><path d="M1 8L8 2L16 7L9 13Z" fill="#2DB52D" stroke="#000" stroke-width="1"/><path d="M1 8L1 11L9 16L16 10L16 7L9 13Z" fill="#fff" stroke="#000" stroke-width="1"/><path d="M7 5h3M7.5 5L7 9M7 7h2" stroke="#fff" stroke-width="1.3"/></svg>
<div class="t " style="left:699px;top:299.00px;font-size:13px;color:#000;">Interviews</div>
<div class="t " style="left:825px;top:299.00px;font-size:13px;color:#000;">10</div>
<div class="t " style="left:881px;top:299.00px;font-size:13px;color:#000;">Super</div>
<div class="t " style="left:970px;top:299.00px;font-size:13px;color:#000;">08/04/0...</div>
<div class="t " style="left:1039px;top:299.00px;font-size:13px;color:#000;">08/04/0...</div>
<svg style="position:absolute;left:681px;top:313px;" width="17" height="17" viewBox="0 0 17 17"><path d="M1 8L8 2L16 7L9 13Z" fill="#2DB52D" stroke="#000" stroke-width="1"/><path d="M1 8L1 11L9 16L16 10L16 7L9 13Z" fill="#fff" stroke="#000" stroke-width="1"/><path d="M7 5h3M7.5 5L7 9M7 7h2" stroke="#fff" stroke-width="1.3"/></svg>
<div class="t " style="left:699px;top:316.00px;font-size:13px;color:#000;">Men</div>
<div class="t " style="left:825px;top:316.00px;font-size:13px;color:#000;">1</div>
<div class="t " style="left:881px;top:316.00px;font-size:13px;color:#000;">Super</div>
<div class="t " style="left:970px;top:316.00px;font-size:13px;color:#000;">08/04/0...</div>
<div class="t " style="left:1039px;top:316.00px;font-size:13px;color:#000;">08/04/0...</div>
<svg style="position:absolute;left:681px;top:330px;" width="17" height="17" viewBox="0 0 17 17"><path d="M1 8L8 2L16 7L9 13Z" fill="#2DB52D" stroke="#000" stroke-width="1"/><path d="M1 8L1 11L9 16L16 10L16 7L9 13Z" fill="#fff" stroke="#000" stroke-width="1"/><path d="M7 5h3M7.5 5L7 9M7 7h2" stroke="#fff" stroke-width="1.3"/></svg>
<div class="t " style="left:699px;top:333.00px;font-size:13px;color:#000;">Not doing paid wo...</div>
<div class="t " style="left:825px;top:333.00px;font-size:13px;color:#000;">4</div>
<div class="t " style="left:881px;top:333.00px;font-size:13px;color:#000;">Super</div>
<div class="t " style="left:970px;top:333.00px;font-size:13px;color:#000;">14/05/0...</div>
<div class="t " style="left:1039px;top:333.00px;font-size:13px;color:#000;">14/05/0...</div>
<svg style="position:absolute;left:681px;top:347px;" width="17" height="17" viewBox="0 0 17 17"><path d="M1 8L8 2L16 7L9 13Z" fill="#2DB52D" stroke="#000" stroke-width="1"/><path d="M1 8L1 11L9 16L16 10L16 7L9 13Z" fill="#fff" stroke="#000" stroke-width="1"/><path d="M7 5h3M7.5 5L7 9M7 7h2" stroke="#fff" stroke-width="1.3"/></svg>
<div class="t " style="left:699px;top:350.00px;font-size:13px;color:#000;">Women</div>
<div class="t " style="left:825px;top:350.00px;font-size:13px;color:#000;">8</div>
<div class="t " style="left:881px;top:350.00px;font-size:13px;color:#000;">Super</div>
<div class="t " style="left:970px;top:350.00px;font-size:13px;color:#000;">08/04/0...</div>
<div class="t " style="left:1039px;top:350.00px;font-size:13px;color:#000;">08/04/0...</div>
<div style="left:670px;top:414px;width:554px;height:5px;background:#ECE9D8"></div>
<div style="left:675px;top:413px;width:544px;height:2px;background:#A9B8C8"></div>
<div style="left:675px;top:415px;width:544px;height:2px;background:#000"></div>
<div style="left:675px;top:417px;width:544px;height:2px;background:#A9B8C8"></div>
<div style="left:675px;top:419px;width:244px;height:241px;background:#fff;border:1px solid #7F9DB9"></div>
<div style="left:676px;top:420px;width:242px;height:1px;background:#9D9D9D"></div>
<div style="left:676px;top:420px;width:1px;height:239px;background:#9D9D9D"></div>
<div id="f61" class="t " style="left:684px;top:424.00px;font-size:13px;color:#000;transform:scaleX(0.9949);transform-origin:0 0;">P 5: Blax_g10 - amend redone....</div>
<div id="f62" class="t " style="left:684px;top:441.00px;font-size:13px;color:#000;transform:scaleX(0.9817);transform-origin:0 0;">P 6: Blax_g15 - amend.asc</div>
<div id="f63" class="t " style="left:684px;top:458.00px;font-size:13px;color:#000;transform:scaleX(0.9817);transform-origin:0 0;">P 7: Blax_g19 - amend.asc</div>
<div id="f64" class="t " style="left:684px;top:475.00px;font-size:13px;color:#000;transform:scaleX(0.9823);transform-origin:0 0;">P 8: Blax_g9 - amend.asc</div>
<div style="left:976px;top:419px;width:243px;height:241px;background:#fff;border:1px solid #7F9DB9"></div>
<div style="left:977px;top:420px;width:241px;height:1px;background:#9D9D9D"></div>
<div style="left:977px;top:420px;width:1px;height:239px;background:#9D9D9D"></div>
<div id="f65" class="t " style="left:982px;top:424.00px;font-size:13px;color:#6B1010;transform:scaleX(0.9646);transform-origin:0 0;">P 1: 100F_JAY1_91.asc</div>
<div id="f66" class="t " style="left:982px;top:441.00px;font-size:13px;color:#6B1010;transform:scaleX(0.9467);transform-origin:0 0;">P 3: 100F_MURPHY1_115.asc</div>
<div id="f67" class="t " style="left:982px;top:458.00px;font-size:13px;color:#6B1010;transform:scaleX(0.9804);transform-origin:0 0;">P 9: Edw_beales.asc</div>
<div id="f68" class="t " style="left:982px;top:475.00px;font-size:13px;color:#6B1010;transform:scaleX(0.9737);transform-origin:0 0;">P10: Edw_childs.asc</div>
<div id="f69" class="t " style="left:982px;top:492.00px;font-size:13px;color:#6B1010;transform:scaleX(0.9794);transform-origin:0 0;">P11: Edw_davies.asc</div>
<div id="f70" class="t " style="left:982px;top:509.00px;font-size:13px;color:#6B1010;transform:scaleX(0.9735);transform-origin:0 0;">P12: Edw_Clay.asc</div>
<div style="left:924px;top:420px;width:22px;height:239px;background:linear-gradient(90deg,#F7F7F3,#F2F1EA 70%,#E4E2D6);border:1px solid #1C3F6E;border-radius:3px"></div>
<div class="t " style="left:931px;top:533.00px;font-size:13px;color:#000;">&lt;</div>
<div style="left:954px;top:420px;width:22px;height:239px;background:linear-gradient(90deg,#F7F7F3,#F2F1EA 70%,#E4E2D6);border:1px solid #1C3F6E;border-radius:3px"></div>
<div class="t " style="left:961px;top:533.00px;font-size:13px;color:#000;">&gt;</div>
<div style="left:675px;top:660px;width:540px;height:11px;background:#C4C4C4"></div>
<div style="left:675px;top:664px;width:544px;height:2px;background:#000"></div>
<div style="left:675px;top:670px;width:544px;height:2px;background:#858585"></div>
<div style="left:677px;top:672px;width:540px;height:5px;background:#fff"></div>
<div style="left:1196px;top:673px;width:21px;height:4px;background:#C5D5F5"></div>
<div style="left:1219px;top:695px;width:2px;height:2px;background:#A8A596"></div>
<div style="left:1215px;top:699px;width:2px;height:2px;background:#A8A596"></div>
<div style="left:1219px;top:699px;width:2px;height:2px;background:#A8A596"></div>
<div style="left:1211px;top:703px;width:2px;height:2px;background:#A8A596"></div>
<div style="left:1215px;top:703px;width:2px;height:2px;background:#A8A596"></div>
<div style="left:1219px;top:703px;width:2px;height:2px;background:#A8A596"></div>
<div style="left:670px;top:678px;width:554px;height:1px;background:#C9C6B8"></div>
<div style="left:670px;top:679px;width:554px;height:27px;background:linear-gradient(#F2F0E8,#ECE9D8)"></div>
<div class="t " style="left:671px;top:689.00px;font-size:13px;color:#000;">6 Families</div>
<div class="t " style="left:753px;top:689.00px;font-size:13px;color:#000;">Blaxter</div>
<div style="left:748px;top:683px;width:1px;height:22px;background:#C9C6B8"></div>
<div style="left:749px;top:683px;width:1px;height:22px;background:#fff"></div>
<div style="left:911px;top:683px;width:1px;height:22px;background:#C9C6B8"></div>
<div style="left:912px;top:683px;width:1px;height:22px;background:#fff"></div>
<div style="left:992px;top:683px;width:1px;height:22px;background:#C9C6B8"></div>
<div style="left:993px;top:683px;width:1px;height:22px;background:#fff"></div>
<div style="left:860px;top:750px;width:286px;height:158px;background:#6C87DA;border-radius:7px 7px 0 0"></div>
<div style="left:860px;top:750px;width:286px;height:35px;background:linear-gradient(#A3B6EE 0px,#8AA4EA 3px,#7C97E3 8px,#7A94E0 28px,#6F89DA 35px);border-radius:7px 7px 0 0"></div>
<div id="f71" class="t " style="left:867px;top:762.73px;font-size:14.5px;color:#E8ECFA;transform:scaleX(1.0226);transform-origin:0 0;font-weight:bold;letter-spacing:0.55px">Create Primary Doc Family</div>
<div style="left:1114px;top:755px;width:26px;height:26px;background:#AE6E80;border:1px solid #E8EEFB;border-radius:3px"></div>
<svg style="position:absolute;left:1114px;top:755px;" width="26" height="26" viewBox="0 0 26 26"><path d="M6 6L20 20M20 6L6 20" stroke="#fff" stroke-width="3.2"/></svg>
<div style="left:863px;top:785px;width:280px;height:119px;background:#ECE9D8"></div>
<div class="t " style="left:869px;top:803.00px;font-size:13px;color:#000;">Please enter unique name:</div>
<div style="left:870px;top:825px;width:266px;height:24px;background:#fff;border:1px solid #7F9DB9"></div>
<div style="left:871px;top:866px;width:68px;height:30px;background:linear-gradient(#FFFFFF,#F3F3EF 60%,#E6E5DD);border:1px solid #003C74;border-radius:3px"></div>
<div class="t" style="left:871px;top:873px;width:68px;text-align:center;font-size:13px">OK</div>
<div style="left:948px;top:866px;width:68px;height:30px;background:linear-gradient(#FFFFFF,#F3F3EF 60%,#E6E5DD);border:1px solid #003C74;border-radius:3px"></div>
<div class="t" style="left:948px;top:873px;width:68px;text-align:center;font-size:13px">Cancel</div>
<div style="left:1032px;top:866px;width:68px;height:30px;background:linear-gradient(#FFFFFF,#F3F3EF 60%,#E6E5DD);border:1px solid #003C74;border-radius:3px"></div>
<div class="t" style="left:1032px;top:873px;width:68px;text-align:center;font-size:13px">Help</div>
<svg style="position:absolute;left:16px;top:62px;" width="19" height="17" viewBox="0 0 19 17"><g shape-rendering="crispEdges"><path d="M3 5V12M6 13.5H12" stroke="#1C9A1C" stroke-width="1.4" fill="none"/></g><path d="M6 4.5L8.5 7M12 7L14 5.5M12 9.5L14.5 12.5" stroke="#D01010" stroke-width="1" fill="none"/><g shape-rendering="crispEdges"><rect x="1" y="1" width="6" height="4" fill="#9A9A90"/><rect x="0.5" y="0.5" width="6" height="4" fill="#fff" stroke="#000"/><rect x="13" y="2" width="5" height="4" fill="#9A9A90"/><rect x="12.5" y="1.5" width="5" height="4" fill="#fff" stroke="#000"/><rect x="8" y="7" width="5" height="3" fill="#9A9A90"/><rect x="7.5" y="6.5" width="5" height="3" fill="#fff" stroke="#000"/><rect x="1" y="12" width="5" height="3" fill="#9A9A90"/><rect x="0.5" y="11.5" width="5" height="3" fill="#fff" stroke="#000"/><rect x="13" y="13" width="5" height="3" fill="#9A9A90"/><rect x="12.5" y="12.5" width="5" height="3" fill="#fff" stroke="#000"/></g></svg>
<svg style="position:absolute;left:43px;top:69px;" width="6" height="4" viewBox="0 0 6 4"><path d="M0 0H5L2.5 3Z" fill="#000"/></svg>
<svg style="position:absolute;left:60px;top:64px;" width="17" height="14" viewBox="0 0 17 14"><g shape-rendering="crispEdges"><rect x="1" y="1" width="15" height="12" fill="#6B6B6B"/><rect x="0.5" y="0.5" width="15" height="12" fill="#FFFF00" stroke="#000"/><rect x="1" y="1" width="14" height="2" fill="#808080"/><rect x="11" y="1" width="1" height="1" fill="#fff"/><rect x="13" y="1" width="1" height="1" fill="#fff"/></g></svg>
<svg style="position:absolute;left:87px;top:64px;" width="16" height="14" viewBox="0 0 16 14"><g shape-rendering="crispEdges"><rect x="0.5" y="0.5" width="14" height="13" fill="#6B6B6B" stroke="#000"/><rect x="3" y="1" width="9" height="5" fill="#F0F0F0"/><rect x="3" y="9" width="9" height="4" fill="#000"/><rect x="9" y="10" width="2" height="3" fill="#fff"/></g></svg>
<div style="left:110px;top:61px;width:1px;height:20px;background:#C5C2B1"></div>
<div style="left:111px;top:61px;width:1px;height:20px;background:#fff"></div>
<svg style="position:absolute;left:122px;top:62px;" width="20" height="16" viewBox="0 0 20 16"><g shape-rendering="crispEdges"><rect x="0" y="6" width="7" height="4" fill="#FFFF40"/><path d="M7 8H11M11 3V14M11 3H14M11 8H14M11 14H14" stroke="#000" fill="none"/><rect x="14" y="1" width="5" height="4" fill="#FFFF40"/><rect x="14" y="6" width="5" height="4" fill="#FFFF40"/><rect x="14" y="11" width="5" height="4" fill="#FFFF40"/><path d="M14 3h5M14 8h5M14 13h5" stroke="#000" stroke-width="0.8"/></g></svg>
<svg style="position:absolute;left:150px;top:64px;" width="16" height="14" viewBox="0 0 16 14"><g shape-rendering="crispEdges"><path d="M1 13V6L3 1H6V7H10V1H13L15 6V13H10V9H6V13Z" fill="#000"/><rect x="2" y="9" width="2" height="3" fill="#fff"/><rect x="12" y="9" width="2" height="3" fill="#fff"/></g></svg>
<div style="left:174px;top:61px;width:1px;height:20px;background:#C5C2B1"></div>
<div style="left:175px;top:61px;width:1px;height:20px;background:#fff"></div>
<svg style="position:absolute;left:188px;top:63px;" width="18" height="15" viewBox="0 0 18 15"><path d="M1 4H5L6 5H12V13H1Z" fill="#fff" stroke="#000"/><path d="M1 13L4 8H17L13 13Z" fill="#808080" stroke="#000"/><path d="M9 4Q12 0 16 3" stroke="#000" fill="none"/><path d="M14 1L17 3L14 5" stroke="#000" fill="none"/></svg>
<div style="left:212px;top:61px;width:1px;height:20px;background:#C5C2B1"></div>
<div style="left:213px;top:61px;width:1px;height:20px;background:#fff"></div>
<svg style="position:absolute;left:225px;top:63px;" width="16" height="15" viewBox="0 0 16 15"><g shape-rendering="crispEdges"><rect x="0.5" y="3.5" width="13" height="11" fill="#fff" stroke="#000"/><path d="M3 9h7M3 12h7" stroke="#000"/><rect x="1" y="3" width="3" height="3" fill="#000"/></g><path d="M6 8L12 2L15 3L10 9Z" fill="#fff" stroke="#000"/></svg>
<svg style="position:absolute;left:252px;top:64px;" width="16" height="14" viewBox="0 0 16 14"><g shape-rendering="crispEdges"><rect x="0" y="0" width="16" height="1" fill="#1C3F9F"/><path d="M0 3.5H16" stroke="#000" stroke-dasharray="3 1"/><path d="M0 6.5H16" stroke="#000" stroke-dasharray="3 1"/><path d="M0 9.5H16" stroke="#000" stroke-dasharray="3 1"/><path d="M0 12.5H16" stroke="#000" stroke-dasharray="3 1"/></g></svg>
<svg style="position:absolute;left:278px;top:64px;" width="17" height="15" viewBox="0 0 17 15"><ellipse cx="8.5" cy="7.5" rx="7.8" ry="7" fill="#0A3ACD" stroke="#000" stroke-width="1"/><path d="M2.5 4Q5 1 9 2Q9 5 6.5 6Q6 8 8 9.5Q8 12 7.5 14Q5 12 4.5 9.5Q2 8 2.5 4Z" fill="#2DB02D"/><path d="M10.5 3.5Q14 5 15 8Q13 9 12.5 11Q11.5 13 10.5 13Q11 10 10 8.5Q9.5 6 10.5 3.5Z" fill="#2DB02D"/><ellipse cx="6" cy="4" rx="1.5" ry="1" fill="#8AE08A" opacity="0.6"/></svg>
<svg style="position:absolute;left:304px;top:69px;" width="6" height="4" viewBox="0 0 6 4"><path d="M0 0H5L2.5 3Z" fill="#000"/></svg>
<svg style="position:absolute;left:321px;top:63px;" width="16" height="15" viewBox="0 0 16 15"><path d="M2 14L10 6" stroke="#3A1A10" stroke-width="2.5"/><path d="M6 4L10 1L15 6L13 8L10 5L8 7Z" fill="#8A8A2A" stroke="#000" stroke-width="1"/></svg>
<svg style="position:absolute;left:350px;top:66px;" width="12" height="10" viewBox="0 0 12 10"><path d="M0.5 5L5 0.5V3H11.5V7H5V9.5Z" fill="#2A8FA0" stroke="#000" stroke-width="1"/></svg>
<svg style="position:absolute;left:373px;top:69px;" width="6" height="4" viewBox="0 0 6 4"><path d="M0 0H5L2.5 3Z" fill="#000"/></svg>
<svg style="position:absolute;left:389px;top:64px;" width="16" height="15" viewBox="0 0 16 15"><path d="M1 1L11 10" stroke="#3A1A10" stroke-width="2.5"/><path d="M9 12L13 8L15 10L11 14Z" fill="#8A8A2A" stroke="#000" stroke-width="1"/><rect x="11" y="10" width="2" height="2" fill="#E02020"/></svg>
<svg style="position:absolute;left:17px;top:92px;" width="16" height="15" viewBox="0 0 16 15"><path d="M1 14L3 10L13 1L15 3L5 12Z" fill="#FFFFA0" stroke="#000" stroke-width="1"/><path d="M3 10L5 12" stroke="#000"/></svg>
<svg style="position:absolute;left:43px;top:98px;" width="6" height="4" viewBox="0 0 6 4"><path d="M0 0H5L2.5 3Z" fill="#000"/></svg>
<div class="t b" style="left:65px;top:93px;font-size:13px;color:#A9A697;font-family:Liberation Serif;font-weight:bold">B</div>
<svg style="position:absolute;left:89px;top:95px;" width="14" height="10" viewBox="0 0 14 10"><path d="M1 9.5H5L13 0.5H9Z" fill="#A9A697"/></svg>
<div class="t b" style="left:117px;top:93px;font-size:13px;color:#A9A697;font-family:Liberation Serif;font-weight:bold">U</div>
<div style="left:117px;top:105px;width:10px;height:1px;background:#A9A697"></div>
<div style="left:138px;top:90px;width:1px;height:20px;background:#C5C2B1"></div>
<div style="left:139px;top:90px;width:1px;height:20px;background:#fff"></div>
<svg style="position:absolute;left:155px;top:96px;" width="10" height="7" viewBox="0 0 10 7"><path d="M1 1L5 5L9 1" stroke="#A9A697" stroke-width="2.2" fill="none"/></svg>
<svg style="position:absolute;left:181px;top:96px;" width="10" height="7" viewBox="0 0 10 7"><path d="M1 6L5 2L9 6" stroke="#A9A697" stroke-width="2.2" fill="none"/></svg>
<svg style="position:absolute;left:206px;top:93px;" width="14" height="13" viewBox="0 0 14 13"><g shape-rendering="crispEdges"><rect x="0.5" y="0.5" width="12" height="12" fill="none" stroke="#A9A697"/><path d="M3 3H10V10H7V8H5V10H3Z" fill="#A9A697"/></g></svg>
<svg style="position:absolute;left:232px;top:93px;" width="16" height="12" viewBox="0 0 16 12"><path d="M0 12L2 8L8 0H16L14 4L8 12Z" fill="#A9A697"/></svg>
<div style="left:254px;top:90px;width:1px;height:20px;background:#C5C2B1"></div>
<div style="left:255px;top:90px;width:1px;height:20px;background:#fff"></div>
<svg style="position:absolute;left:270px;top:93px;" width="12" height="13" viewBox="0 0 12 13"><g shape-rendering="crispEdges"><rect x="0" y="1" width="12" height="1" fill="#A9A697"/><rect x="0" y="3" width="8" height="1" fill="#A9A697"/><rect x="0" y="5" width="12" height="1" fill="#A9A697"/><rect x="0" y="7" width="8" height="1" fill="#A9A697"/><rect x="0" y="9" width="12" height="1" fill="#A9A697"/><rect x="0" y="11" width="8" height="1" fill="#A9A697"/></g></svg>
<svg style="position:absolute;left:297px;top:93px;" width="12" height="13" viewBox="0 0 12 13"><g shape-rendering="crispEdges"><rect x="0.0" y="1" width="12" height="1" fill="#A9A697"/><rect x="2.0" y="3" width="8" height="1" fill="#A9A697"/><rect x="0.0" y="5" width="12" height="1" fill="#A9A697"/><rect x="2.0" y="7" width="8" height="1" fill="#A9A697"/><rect x="0.0" y="9" width="12" height="1" fill="#A9A697"/><rect x="2.0" y="11" width="8" height="1" fill="#A9A697"/></g></svg>
<svg style="position:absolute;left:322px;top:93px;" width="12" height="13" viewBox="0 0 12 13"><g shape-rendering="crispEdges"><rect x="0" y="1" width="12" height="1" fill="#A9A697"/><rect x="4" y="3" width="8" height="1" fill="#A9A697"/><rect x="0" y="5" width="12" height="1" fill="#A9A697"/><rect x="4" y="7" width="8" height="1" fill="#A9A697"/><rect x="0" y="9" width="12" height="1" fill="#A9A697"/><rect x="4" y="11" width="8" height="1" fill="#A9A697"/></g></svg>
<div style="left:344px;top:90px;width:1px;height:20px;background:#C5C2B1"></div>
<div style="left:345px;top:90px;width:1px;height:20px;background:#fff"></div>
<svg style="position:absolute;left:359px;top:93px;" width="14" height="13" viewBox="0 0 14 13"><g shape-rendering="crispEdges"><rect x="0" y="1" width="3" height="3" fill="#A9A697"/><rect x="0" y="5" width="3" height="3" fill="#A9A697"/><rect x="0" y="9" width="3" height="3" fill="#A9A697"/><rect x="5" y="2" width="9" height="1" fill="#A9A697"/><rect x="5" y="6" width="9" height="1" fill="#A9A697"/><rect x="5" y="10" width="9" height="1" fill="#A9A697"/></g></svg>
<div style="left:382px;top:90px;width:1px;height:20px;background:#C5C2B1"></div>
<div style="left:383px;top:90px;width:1px;height:20px;background:#fff"></div>
<svg style="position:absolute;left:398px;top:92px;" width="11" height="15" viewBox="0 0 11 15"><path d="M2 0L7 9M9 0L4 9" stroke="#A9A697" stroke-width="1.2"/><circle cx="3" cy="12" r="2.2" fill="none" stroke="#A9A697" stroke-width="1.2"/><circle cx="8" cy="12" r="2.2" fill="none" stroke="#A9A697" stroke-width="1.2"/></svg>
<svg style="position:absolute;left:422px;top:93px;" width="16" height="14" viewBox="0 0 16 14"><g shape-rendering="crispEdges"><rect x="0.5" y="0.5" width="8" height="9" fill="#fff" stroke="#000"/><path d="M2 3h5M2 5h5M2 7h4" stroke="#000"/><rect x="6.5" y="4.5" width="9" height="9" fill="#fff" stroke="#0A246A"/><path d="M8 7h6M8 9h6M8 11h5" stroke="#000"/></g></svg>
<svg style="position:absolute;left:448px;top:93px;" width="17" height="14" viewBox="0 0 17 14"><g shape-rendering="crispEdges"><rect x="0" y="2" width="12" height="12" fill="#A9A697"/><rect x="3" y="0" width="6" height="3" fill="#A9A697"/><rect x="7.5" y="7.5" width="9" height="6" fill="#fff" stroke="#A9A697"/><path d="M9 10h5" stroke="#A9A697"/></g></svg>
<svg style="position:absolute;left:5px;top:158px;" width="20" height="15" viewBox="0 0 20 15"><g shape-rendering="crispEdges"><rect x="1" y="6" width="6" height="2" fill="#E00000"/><path d="M7 4L10 7L7 10Z" fill="#E00000"/><path d="M11 1h8M10 3h6M12 5h7M10 7h9M10 9h8M11 11h7M12 13h6" stroke="#000"/></g></svg>
<svg style="position:absolute;left:6px;top:182px;" width="18" height="12" viewBox="0 0 18 12"><g shape-rendering="crispEdges"><path d="M0.5 0.5H11L17 6L11 11.5H0.5Z" fill="#fff" stroke="#000"/><rect x="1" y="1" width="3" height="10" fill="#D03080"/><path d="M11 1L16.5 6L11 11" stroke="#10C010" stroke-width="2" fill="none"/></g></svg>
<div style="left:4px;top:205px;width:26px;height:1px;background:#C5C2B1"></div>
<div style="left:4px;top:206px;width:26px;height:1px;background:#fff"></div>
<svg style="position:absolute;left:6px;top:217px;" width="18" height="12" viewBox="0 0 18 12"><g shape-rendering="crispEdges"><rect x="2" y="2" width="16" height="10" fill="#808070"/><rect x="1" y="1" width="15" height="9" fill="#fff" stroke="#000" stroke-width="2"/></g></svg>
<svg style="position:absolute;left:6px;top:239px;" width="18" height="15" viewBox="0 0 18 15"><g shape-rendering="crispEdges"><rect x="1.5" y="1.5" width="8" height="4" fill="#FFFF60" stroke="#000"/><path d="M11 1h7M11 13h7M11 7h7" stroke="#000"/><path d="M13 3h5M13 5h5M13 9h5M13 11h5" stroke="#888"/></g></svg>
<svg style="position:absolute;left:7px;top:262px;" width="14" height="16" viewBox="0 0 14 16"><g shape-rendering="crispEdges"><path d="M1 1h7M1 3h5M8 3h5M1 5h6M9 5h4" stroke="#000"/><rect x="6" y="5" width="2" height="4" fill="#0000E0"/><path d="M4 8H10L7 11Z" fill="#0000E0"/><rect x="2.5" y="10.5" width="10" height="5" fill="#FFFF00" stroke="#000"/></g></svg>
<svg style="position:absolute;left:6px;top:284px;" width="19" height="15" viewBox="0 0 19 15"><g shape-rendering="crispEdges"><path d="M0 4h2M0 6h6M0 8h4M0 10h6M0 12h6" stroke="#000"/><rect x="13.5" y="0.5" width="5" height="3" fill="#fff" stroke="#000"/><rect x="13.5" y="5.5" width="5" height="3" fill="#fff" stroke="#000"/><rect x="13.5" y="10.5" width="5" height="3" fill="#fff" stroke="#000"/></g><path d="M13 2Q9 3 7 6M13 7H8M13 12Q9 11 8 8" stroke="#0000E0" fill="none"/></svg>
<svg style="position:absolute;left:5px;top:307px;" width="20" height="16" viewBox="0 0 20 16"><g shape-rendering="crispEdges"><rect x="1.5" y="1.5" width="8" height="4" fill="#E8E8E0" stroke="#000" stroke-width="2"/><rect x="11.5" y="10.5" width="7" height="4" fill="#E8E8E0" stroke="#000" stroke-width="2"/></g><path d="M8 5L13 10" stroke="#800000"/></svg>
<div style="left:4px;top:331px;width:26px;height:1px;background:#C5C2B1"></div>
<div style="left:4px;top:332px;width:26px;height:1px;background:#fff"></div>
<svg style="position:absolute;left:8px;top:342px;" width="16" height="16" viewBox="0 0 16 16"><g shape-rendering="crispEdges"><rect x="0.5" y="4.5" width="14" height="11" fill="#fff" stroke="#000"/><rect x="1" y="5" width="3" height="10" fill="#E00000"/><path d="M8 7L13 1L15 3L10 9Z" fill="#FFE040" stroke="#000"/><path d="M6 11Q8 9 11 12" stroke="#000" fill="none"/></g></svg>
<svg style="position:absolute;left:9px;top:366px;" width="13" height="12" viewBox="0 0 13 12"><path d="M1 6L5 10L12 2" stroke="#000" stroke-width="3" fill="none"/></svg>
<div style="left:4px;top:390px;width:26px;height:1px;background:#C5C2B1"></div>
<div style="left:4px;top:391px;width:26px;height:1px;background:#fff"></div>
<div class="t" style="left:7px;top:401px;font-size:14px;font-weight:bold;color:#000;letter-spacing:-0.5px;text-shadow:1px 1px 0 #A0A090">99</div>
<svg style="position:absolute;left:6px;top:422px;" width="19" height="18" viewBox="0 0 19 18"><g shape-rendering="crispEdges"><path d="M0 1h5M7 1h4M0 4h10M0 6h4M6 6h5M0 9h10M0 11h10M0 14h5M7 14h4M0 16h10" stroke="#000"/><rect x="12" y="0" width="1" height="18" fill="#000"/><path d="M15 2h3M15 6h3M15 10h3M15 14h3" stroke="#C00000"/></g></svg>
<div style="left:4px;top:448px;width:26px;height:1px;background:#C5C2B1"></div>
<div style="left:4px;top:449px;width:26px;height:1px;background:#fff"></div>
<svg style="position:absolute;left:5px;top:457px;" width="22" height="19" viewBox="0 0 22 19"><path d="M2.5 3.5H9.5L12.5 7.5H2.5Z" fill="#888" transform="translate(1,1)"/><path d="M1.5 2.5H8.5L11.5 6.5H1.5Z" fill="#C00000" stroke="#000" stroke-width="1.5"/><path d="M11.5 12.5H18.5L21.5 16.5H11.5Z" fill="#888" transform="translate(0.5,1)"/><path d="M10.5 11.5H17.5L20.5 15.5H10.5Z" fill="#fff" stroke="#000" stroke-width="1.5"/><path d="M4 8Q4 13 10.5 14" stroke="#10A010" stroke-width="1.6" fill="none" stroke-dasharray="2 1"/></svg>
<svg style="position:absolute;left:5px;top:480px;" width="22" height="19" viewBox="0 0 22 19"><path d="M2.5 3.5H9.5L12.5 7.5H2.5Z" fill="#888" transform="translate(1,1)"/><path d="M1.5 2.5H8.5L11.5 6.5H1.5Z" fill="#fff" stroke="#000" stroke-width="1.5"/><path d="M11.5 12.5H18.5L21.5 16.5H11.5Z" fill="#888" transform="translate(0.5,1)"/><path d="M10.5 11.5H17.5L20.5 15.5H10.5Z" fill="#C00000" stroke="#000" stroke-width="1.5"/><path d="M4 8Q4 13 10.5 14" stroke="#10A010" stroke-width="1.6" fill="none" stroke-dasharray="2 1"/></svg>
<svg style="position:absolute;left:7px;top:506px;" width="17" height="12" viewBox="0 0 17 12"><g shape-rendering="crispEdges"><rect x="0.5" y="0.5" width="15" height="11" fill="#fff" stroke="#000"/><rect x="2.5" y="2.5" width="11" height="7" fill="none" stroke="#000"/><rect x="5" y="5" width="6" height="2" fill="#000"/></g></svg>
<div style="left:4px;top:529px;width:26px;height:1px;background:#C5C2B1"></div>
<div style="left:4px;top:530px;width:26px;height:1px;background:#fff"></div>
<svg style="position:absolute;left:7px;top:539px;" width="18" height="17" viewBox="0 0 18 17"><g shape-rendering="crispEdges"><rect x="4.5" y="4.5" width="9" height="8" fill="#fff" stroke="#000"/><rect x="6" y="6" width="3" height="2" fill="none" stroke="#000" stroke-width="0.9"/><rect x="9" y="9" width="3" height="2" fill="none" stroke="#000" stroke-width="0.9"/></g><path d="M0.5 0.5L3.5 3.5M0.5 0.5H3M0.5 0.5V3M17.5 0.5L14.5 3.5M17.5 0.5H15M17.5 0.5V3M0.5 16.5L3.5 13.5M0.5 16.5H3M0.5 16.5V14M17.5 16.5L14.5 13.5M17.5 16.5H15M17.5 16.5V14" stroke="#000" stroke-width="1.2"/><path d="M9 0L7 2.5H11ZM9 17L7 14.5H11ZM0 8.5L2.5 6.5V10.5ZM18 8.5L15.5 6.5V10.5Z" fill="#000"/></svg>
<svg style="position:absolute;left:2px;top:4px;" width="20" height="22" viewBox="0 0 20 22"><ellipse cx="10" cy="12" rx="8" ry="8" fill="#1050C0"/><path d="M3 9Q6 3 12 5Q9 8 5 14Z" fill="#40C040"/><path d="M13 8Q16 10 17 14Q14 13 13 10Z" fill="#20A020"/><path d="M1 17Q8 6 19 2" stroke="#A0E0FF" stroke-width="1.5" fill="none"/><text x="6" y="16" font-family="Liberation Sans" font-weight="bold" font-size="9" fill="#000">ti</text></svg>
<svg style="position:absolute;left:673px;top:211px;" width="18" height="17" viewBox="0 0 18 17"><g shape-rendering="crispEdges"><rect x="4.5" y="8.5" width="13" height="7" fill="#C0C0B8" stroke="#000"/><path d="M6 11h10M6 13h10" stroke="#fff"/><rect x="14" y="10" width="2" height="1" fill="#10D010"/></g><path d="M1 5L6 7M4 1L5 6M1 1L6 6M3 9L6 7" stroke="#000" stroke-width="0.8"/><circle cx="5" cy="6" r="2" fill="#FFFF60"/></svg>
<svg style="position:absolute;left:701px;top:214px;" width="17" height="14" viewBox="0 0 17 14"><g shape-rendering="crispEdges"><rect x="3.5" y="3.5" width="8" height="7" fill="#fff" stroke="#000"/><rect x="0.5" y="0.5" width="6" height="6" fill="#808080" stroke="#000"/><rect x="9.5" y="7.5" width="6" height="6" fill="#808080" stroke="#000"/></g></svg>
<svg style="position:absolute;left:727px;top:214px;" width="17" height="14" viewBox="0 0 17 14"><g shape-rendering="crispEdges"><rect x="1" y="1" width="15" height="12" fill="#6B6B6B"/><rect x="0.5" y="0.5" width="15" height="12" fill="#FFFF00" stroke="#000"/><rect x="1" y="1" width="14" height="2" fill="#808080"/><rect x="11" y="1" width="1" height="1" fill="#fff"/><rect x="13" y="1" width="1" height="1" fill="#fff"/></g></svg>
<svg style="position:absolute;left:754px;top:213px;" width="15" height="16" viewBox="0 0 15 16"><g shape-rendering="crispEdges"><rect x="0.5" y="0.5" width="13" height="14" fill="#fff" stroke="#000"/><rect x="11" y="1" width="3" height="14" fill="#000"/><path d="M3 4h5M3 6.5h4M3 9h5M3 11.5h4" stroke="#000"/><rect x="12" y="2" width="1" height="12" fill="#fff"/></g></svg>
<svg style="position:absolute;left:777px;top:212px;" width="19" height="17" viewBox="0 0 19 17"><g shape-rendering="crispEdges"><path d="M3 5V12M6 13.5H12" stroke="#1C9A1C" stroke-width="1.4" fill="none"/></g><path d="M6 4.5L8.5 7M12 7L14 5.5M12 9.5L14.5 12.5" stroke="#D01010" stroke-width="1" fill="none"/><g shape-rendering="crispEdges"><rect x="1" y="1" width="6" height="4" fill="#9A9A90"/><rect x="0.5" y="0.5" width="6" height="4" fill="#fff" stroke="#000"/><rect x="13" y="2" width="5" height="4" fill="#9A9A90"/><rect x="12.5" y="1.5" width="5" height="4" fill="#fff" stroke="#000"/><rect x="8" y="7" width="5" height="3" fill="#9A9A90"/><rect x="7.5" y="6.5" width="5" height="3" fill="#fff" stroke="#000"/><rect x="1" y="12" width="5" height="3" fill="#9A9A90"/><rect x="0.5" y="11.5" width="5" height="3" fill="#fff" stroke="#000"/><rect x="13" y="13" width="5" height="3" fill="#9A9A90"/><rect x="12.5" y="12.5" width="5" height="3" fill="#fff" stroke="#000"/></g></svg>
<svg style="position:absolute;left:803px;top:214px;" width="19" height="15" viewBox="0 0 19 15"><g shape-rendering="crispEdges"><rect x="6.5" y="0.5" width="7" height="6" fill="#E0E000" stroke="#000"/><rect x="9.5" y="3.5" width="7" height="6" fill="#1A8A9A" stroke="#000"/><path d="M1 4V14H18V4" stroke="#B01010" stroke-width="2.5" fill="none"/></g></svg>
<svg style="position:absolute;left:829px;top:211px;" width="19" height="18" viewBox="0 0 19 18"><g shape-rendering="crispEdges"><rect x="5.5" y="7.5" width="13" height="10" fill="#fff" stroke="#808080"/><path d="M7 11h2M10 11h6M7 13h2M10 13h6M7 15h2M10 15h6" stroke="#000"/><path d="M12 3H18L15 6Z" fill="#E02020"/><rect x="0" y="14" width="1" height="1" fill="#000"/></g><path d="M1 1H13L8 7V12L6 11V7Z" fill="#D0D0D0" stroke="#000"/></svg>
<div style="left:855px;top:212px;width:1px;height:18px;background:#C5C2B1"></div>
<div style="left:856px;top:212px;width:1px;height:18px;background:#fff"></div>
<svg style="position:absolute;left:869px;top:214px;" width="15" height="14" viewBox="0 0 15 14"><path d="M1 1L14 13M13 1L1 13" stroke="#000" stroke-width="2"/></svg>
<svg style="position:absolute;left:894px;top:213px;" width="18" height="16" viewBox="0 0 18 16"><g shape-rendering="crispEdges"><path d="M5 1H13V6H5Z" fill="#fff" stroke="#000"/></g><path d="M1.5 7.5H16.5V14.5H1.5Z" fill="#E0E0E0" stroke="#000" stroke-width="1.2"/><path d="M3 11H15" stroke="#000"/></svg>
<svg style="position:absolute;left:922px;top:215px;" width="16" height="12" viewBox="0 0 16 12"><g shape-rendering="crispEdges"><rect x="0" y="0" width="2" height="2" fill="#1C3F9F"/><rect x="3" y="1" width="2" height="1" fill="#000"/><rect x="0" y="5" width="2" height="2" fill="#1C3F9F"/><rect x="3" y="6" width="2" height="1" fill="#000"/><rect x="0" y="10" width="2" height="2" fill="#1C3F9F"/><rect x="3" y="11" width="2" height="1" fill="#000"/><rect x="5" y="0" width="2" height="2" fill="#1C3F9F"/><rect x="8" y="1" width="2" height="1" fill="#000"/><rect x="5" y="5" width="2" height="2" fill="#1C3F9F"/><rect x="8" y="6" width="2" height="1" fill="#000"/><rect x="5" y="10" width="2" height="2" fill="#1C3F9F"/><rect x="8" y="11" width="2" height="1" fill="#000"/><rect x="10" y="0" width="2" height="2" fill="#1C3F9F"/><rect x="13" y="1" width="2" height="1" fill="#000"/><rect x="10" y="5" width="2" height="2" fill="#1C3F9F"/><rect x="13" y="6" width="2" height="1" fill="#000"/><rect x="10" y="10" width="2" height="2" fill="#1C3F9F"/><rect x="13" y="11" width="2" height="1" fill="#000"/></g></svg>
<svg style="position:absolute;left:947px;top:220px;" width="6" height="4" viewBox="0 0 6 4"><path d="M0 0H5L2.5 3Z" fill="#000"/></svg>
<svg style="position:absolute;left:672px;top:157px;" width="20" height="21" viewBox="0 0 20 21"><circle cx="4" cy="2.5" r="2.2" fill="#000"/><path d="M1 5H7V13H6V20H2V13H1Z" fill="#000"/><rect x="9" y="1" width="1.3" height="19" fill="#000"/><circle cx="15" cy="2.5" r="2.2" fill="#000"/><path d="M12 5H18L19 14H16V20H14V14H11Z" fill="#000"/><path d="M13 6L15 9L17 6" stroke="#fff" stroke-width="0.8" fill="none"/></svg>
<svg style="position:absolute;left:10px;top:1022px;" width="26" height="25" viewBox="0 0 26 25"><path d="M3 3Q7 1 11 3L9 11Q5 9 1 11Z" fill="#E8501A"/><path d="M13 4Q17 2 22 4L20 12Q16 10 11 12Z" fill="#40B030"/><path d="M1 13Q5 11 9 13L7 21Q3 19 0 21Z" fill="#2080E0"/><path d="M11 14Q15 12 20 14L18 22Q14 20 9 22Z" fill="#F0C020"/></svg>
<div style="left:122px;top:1022px;width:2px;height:2px;background:#184EB8"></div>
<div style="left:122px;top:1025px;width:2px;height:2px;background:#184EB8"></div>
<div style="left:122px;top:1028px;width:2px;height:2px;background:#184EB8"></div>
<div style="left:122px;top:1031px;width:2px;height:2px;background:#184EB8"></div>
<div style="left:122px;top:1034px;width:2px;height:2px;background:#184EB8"></div>
<div style="left:122px;top:1037px;width:2px;height:2px;background:#184EB8"></div>
<div style="left:122px;top:1040px;width:2px;height:2px;background:#184EB8"></div>
<div style="left:122px;top:1043px;width:2px;height:2px;background:#184EB8"></div>
<div style="left:144px;top:1022px;width:2px;height:2px;background:#184EB8"></div>
<div style="left:144px;top:1025px;width:2px;height:2px;background:#184EB8"></div>
<div style="left:144px;top:1028px;width:2px;height:2px;background:#184EB8"></div>
<div style="left:144px;top:1031px;width:2px;height:2px;background:#184EB8"></div>
<div style="left:144px;top:1034px;width:2px;height:2px;background:#184EB8"></div>
<div style="left:144px;top:1037px;width:2px;height:2px;background:#184EB8"></div>
<div style="left:144px;top:1040px;width:2px;height:2px;background:#184EB8"></div>
<div style="left:144px;top:1043px;width:2px;height:2px;background:#184EB8"></div>
<svg style="position:absolute;left:135px;top:1021px;" width="22" height="21" viewBox="0 0 22 21"><g transform="scale(1)"><path d="M17.5 11.2H7Q7.4 14.6 10.8 14.6Q13.2 14.6 14.3 12.9L17.2 13.7Q15.4 17.6 10.6 17.6Q3.8 17.6 3.8 10.6Q3.8 3.6 10.6 3.6Q17.7 3.6 17.5 11.2ZM7.1 8.9H14Q13.7 6.4 10.6 6.4Q7.7 6.4 7.1 8.9Z" fill="#48A6F2" stroke="#0B4E9E" stroke-width="0.9"/><path d="M2 16Q0 19 4 18Q12 15 19 6Q21 2 18 3" stroke="#F0B838" stroke-width="1.3" fill="none"/></g></svg>
<svg style="position:absolute;left:162px;top:1022px;" width="19" height="19" viewBox="0 0 19 19"><rect x="0" y="0" width="19" height="19" fill="#8A8A28"/><circle cx="9.5" cy="9.5" r="6" fill="none" stroke="#fff" stroke-width="1.5"/><path d="M9.5 5V10H13" stroke="#fff" stroke-width="1.5" fill="none"/></svg>
<svg style="position:absolute;left:188px;top:1022px;" width="20" height="19" viewBox="0 0 20 19"><ellipse cx="10" cy="8" rx="9" ry="7" fill="#D8E4F0" stroke="#5070A0"/><path d="M4 13L3 19L8 14Z" fill="#D8E4F0" stroke="#5070A0"/><rect x="7" y="5" width="6" height="5" fill="#304070"/></svg>
<svg style="position:absolute;left:216px;top:1021px;" width="20" height="20" viewBox="0 0 20 20"><rect x="2" y="2" width="16" height="16" fill="#4A90E0" stroke="#E0F0FF"/><path d="M5 10L10 6L15 10M10 6V15" stroke="#fff" stroke-width="2" fill="none"/><circle cx="17" cy="4" r="2" fill="#E04040"/></svg>
<svg style="position:absolute;left:242px;top:1021px;" width="21" height="21" viewBox="0 0 21 21"><circle cx="10.5" cy="10.5" r="9.5" fill="#F0F0F0"/><path d="M10.5 1A9.5 9.5 0 0 1 19.7 8.5L15.5 9.5A5 5 0 0 0 10.5 5.5Z" fill="#E85020"/><path d="M19.7 8.5A9.5 9.5 0 0 1 12 19.9L11 15.5A5 5 0 0 0 15.5 9.5Z" fill="#F0C020"/><path d="M12 19.9A9.5 9.5 0 0 1 1.2 9L5.6 9.8A5 5 0 0 0 11 15.5Z" fill="#40A040"/><path d="M1.2 9A9.5 9.5 0 0 1 10.5 1V5.5A5 5 0 0 0 5.6 9.8Z" fill="#3080E0"/><path d="M8 6.5L15 10.5L8 14.5Z" fill="#202020"/></svg>
<div style="left:288px;top:1022px;width:2px;height:2px;background:#184EB8"></div>
<div style="left:288px;top:1025px;width:2px;height:2px;background:#184EB8"></div>
<div style="left:288px;top:1028px;width:2px;height:2px;background:#184EB8"></div>
<div style="left:288px;top:1031px;width:2px;height:2px;background:#184EB8"></div>
<div style="left:288px;top:1034px;width:2px;height:2px;background:#184EB8"></div>
<div style="left:288px;top:1037px;width:2px;height:2px;background:#184EB8"></div>
<div style="left:288px;top:1040px;width:2px;height:2px;background:#184EB8"></div>
<div style="left:288px;top:1043px;width:2px;height:2px;background:#184EB8"></div>
<svg style="position:absolute;left:309px;top:1022px;" width="16" height="21" viewBox="0 0 16 21"><rect x="1" y="1" width="14" height="19" fill="#fff" stroke="#808080"/></svg>
<svg style="position:absolute;left:303px;top:1024px;" width="22" height="21" viewBox="0 0 22 21"><g transform="scale(0.85)"><path d="M17.5 11.2H7Q7.4 14.6 10.8 14.6Q13.2 14.6 14.3 12.9L17.2 13.7Q15.4 17.6 10.6 17.6Q3.8 17.6 3.8 10.6Q3.8 3.6 10.6 3.6Q17.7 3.6 17.5 11.2ZM7.1 8.9H14Q13.7 6.4 10.6 6.4Q7.7 6.4 7.1 8.9Z" fill="#48A6F2" stroke="#0B4E9E" stroke-width="0.9"/><path d="M2 16Q0 19 4 18Q12 15 19 6Q21 2 18 3" stroke="#F0B838" stroke-width="1.3" fill="none"/></g></svg>
<svg style="position:absolute;left:466px;top:1022px;" width="21" height="21" viewBox="0 0 21 21"><ellipse cx="10" cy="11" rx="8" ry="8" fill="#1050C0"/><path d="M3 9Q6 3 12 5Q9 8 5 14Z" fill="#40C040"/><path d="M1 17Q8 6 19 2" stroke="#A0E0FF" stroke-width="1.5" fill="none"/><text x="6" y="15" font-family="Liberation Sans" font-weight="bold" font-size="9" fill="#000">ti</text></svg>
<svg style="position:absolute;left:626px;top:1024px;" width="20" height="17" viewBox="0 0 20 17"><path d="M1 3H7L9 5H17V15H1Z" fill="#E8C050" stroke="#A08020"/><path d="M1 15L4 8H19L16 15Z" fill="#F8DC78" stroke="#A08020"/></svg>
<svg style="position:absolute;left:786px;top:1023px;" width="21" height="21" viewBox="0 0 21 21"><rect x="0" y="0" width="21" height="21" fill="#fff" stroke="#C0C0C0"/><path d="M4 8L10 4L17 6L15 12L18 17L10 15L5 18L7 12Z" fill="#E00000"/></svg>
<svg style="position:absolute;left:1208px;top:1022px;" width="20" height="20" viewBox="0 0 20 20"><ellipse cx="10" cy="11" rx="8" ry="8" fill="#1050C0"/><path d="M3 9Q6 3 12 5Q9 8 5 14Z" fill="#40C040"/><path d="M1 17Q8 6 19 2" stroke="#A0E0FF" stroke-width="1.5" fill="none"/><text x="6" y="15" font-family="Liberation Sans" font-weight="bold" font-size="9" fill="#000">ti</text></svg>
<svg style="position:absolute;left:1232px;top:1024px;" width="18" height="16" viewBox="0 0 18 16"><path d="M1 15L6 7L9 11L17 1" stroke="#D01020" stroke-width="2.5" fill="none"/></svg>
<svg style="position:absolute;left:1253px;top:1022px;" width="20" height="20" viewBox="0 0 20 20"><circle cx="6" cy="6" r="3" fill="#60C060"/><circle cx="13" cy="5" r="3" fill="#40A0E0"/><rect x="2" y="9" width="8" height="8" fill="#A0D0A0"/><rect x="10" y="11" width="8" height="8" fill="#E03030" stroke="#fff"/></svg>
<svg style="position:absolute;left:1274px;top:1022px;" width="22" height="20" viewBox="0 0 22 20"><rect x="0" y="0" width="22" height="20" fill="#E81010" stroke="#803040"/><circle cx="11" cy="10" r="8" fill="#fff"/><path d="M8 4L14 9L9 12L14 17" stroke="#E81010" stroke-width="3" fill="none"/></svg>
<svg style="position:absolute;left:1297px;top:1023px;" width="19" height="19" viewBox="0 0 19 19"><rect x="0" y="0" width="19" height="19" fill="#F8F8F8" stroke="#A0B0C0"/><path d="M3 7H6L10 3V16L6 12H3Z" fill="#1050D0"/><path d="M12 6Q14 9.5 12 13M14 4Q17 9.5 14 15" stroke="#1050D0" fill="none"/></svg>
<svg style="position:absolute;left:1320px;top:1022px;" width="22" height="22" viewBox="0 0 22 22"><circle cx="9" cy="9" r="8" fill="#909090" stroke="#505050"/><circle cx="9" cy="9" r="4" fill="#606060"/><path d="M13 20L21 13" stroke="#A0C0FF" stroke-width="1.5"/></svg>
<svg style="position:absolute;left:1226px;top:987px;" width="17" height="17" viewBox="0 0 17 17"><path d="M3.5 3.5L13.5 13.5M13.5 3.5L3.5 13.5" stroke="#B8B8A8" stroke-width="4.5" stroke-linecap="square" transform="translate(0.8,0.8)"/><path d="M3 3L12.5 12.5M12.5 3L3 12.5" stroke="#000" stroke-width="4.6" stroke-linecap="square"/><path d="M2.2 2.2L13.3 13.3M13.3 2.2L2.2 13.3" stroke="#fff" stroke-width="0.9" stroke-dasharray="1.2 1.2"/><path d="M7.75 2.6L12.9 7.75L7.75 12.9L2.6 7.75Z" fill="#FFFF00" stroke="#000" stroke-width="0.6"/></svg></body></html>
